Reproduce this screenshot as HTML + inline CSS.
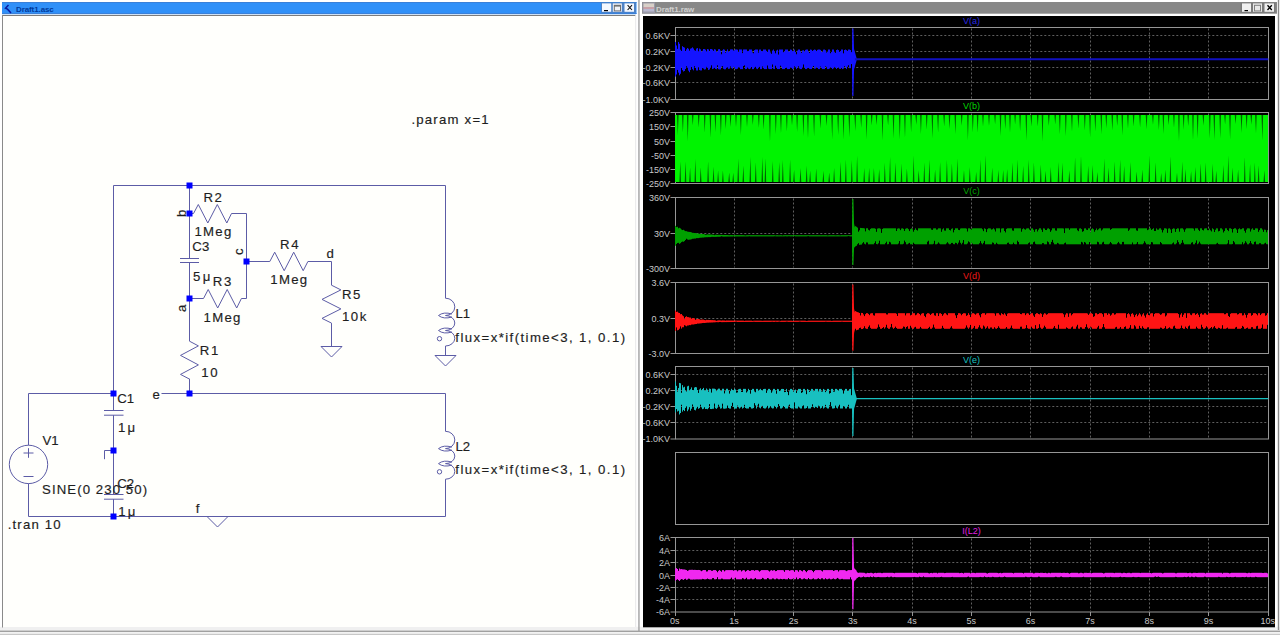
<!DOCTYPE html>
<html><head><meta charset="utf-8"><style>
html,body{margin:0;padding:0;width:1280px;height:635px;overflow:hidden;background:#fff;}
svg{display:block;font-family:"Liberation Sans",sans-serif;}
</style></head><body>
<svg width="1280" height="635" viewBox="0 0 1280 635">
<rect x="0" y="0" width="1280" height="635" fill="#ffffff"/>
<!-- bottom strip -->
<rect x="0" y="626.8" width="1280" height="4" fill="#f0f0f0"/>
<rect x="0" y="630.6" width="1280" height="1.3" fill="#969696"/>
<rect x="0" y="632" width="1280" height="1.8" fill="#f2f2f2"/>
<rect x="0" y="633.8" width="1280" height="1.2" fill="#c8c8c8"/>
<!-- left window -->
<rect x="2" y="2" width="634.5" height="12" fill="#3090f8"/>
<rect x="2" y="2" width="634.5" height="1" fill="#3a80d8"/>
<rect x="2" y="13" width="634.5" height="1" fill="#3a80d8"/>
<rect x="2" y="14" width="634" height="1" fill="#cfe2f6"/>
<rect x="2" y="15" width="634" height="1" fill="#7c7c7c"/>
<rect x="3" y="16" width="632" height="611" fill="#fffffc"/>
<rect x="2" y="15" width="1" height="612.5" fill="#8a8a8a"/>
<path d="M8.5 5 L5.5 8.2 L7.5 9.2 L11 13" fill="none" stroke="#0a1aa0" stroke-width="1.5"/>
<text x="16" y="11.5" font-size="8" font-weight="bold" fill="#003a9a" letter-spacing="-0.1">Draft1.asc</text>
<rect x="601" y="2.6" width="35" height="10.2" fill="#4f82c4"/>
<rect x="602" y="3.4" width="9.2" height="8.4" fill="#f4f8ff"/>
<rect x="604" y="10" width="4" height="1.2" fill="#000"/>
<rect x="612.8" y="3.4" width="9" height="8.4" fill="#f0f2f8"/>
<rect x="614.3" y="5.3" width="6.2" height="5.6" fill="none" stroke="#707070" stroke-width="1"/>
<rect x="614" y="5" width="6.8" height="1.6" fill="#707070"/>
<rect x="624.5" y="3.4" width="9.5" height="8.4" fill="#f4f8ff"/>
<path d="M627.6 5.2 L632 10 M632 5.2 L627.6 10" stroke="#111" stroke-width="1.1"/>
<rect x="638.3" y="0" width="1.3" height="631" fill="#9a9a9a"/><rect x="635.2" y="15" width="1" height="612" fill="#e8e8e8"/>
<!-- schematic -->
<path d="M113.50 393.50 L113.50 185.50 L445.50 185.50 L445.50 298.20" fill="none" stroke="#5c5ca6" stroke-width="1"/><path d="M189.50 185.50 L189.50 258.50" fill="none" stroke="#5c5ca6" stroke-width="1"/><path d="M189.50 262.50 L189.50 341.20" fill="none" stroke="#5c5ca6" stroke-width="1"/><path d="M189.50 378.80 L189.50 393.50" fill="none" stroke="#5c5ca6" stroke-width="1"/><path d="M180.00 258.50 L199.00 258.50" fill="none" stroke="#5c5ca6" stroke-width="1"/><path d="M180.00 262.50 L199.00 262.50" fill="none" stroke="#5c5ca6" stroke-width="1"/><path d="M189.50 213.50 L193.50 213.50 L198.30 204.50 L207.80 223.00 L217.30 204.50 L226.80 223.00 L231.50 213.50 L246.50 213.50 L246.50 298.50" fill="none" stroke="#5c5ca6" stroke-width="1"/><path d="M189.50 298.50 L203.50 298.50 L208.20 289.50 L217.70 308.00 L227.20 289.50 L236.70 308.00 L241.40 298.50 L246.50 298.50" fill="none" stroke="#5c5ca6" stroke-width="1"/><path d="M246.50 261.50 L269.80 261.50 L274.70 252.20 L284.20 270.70 L293.70 252.20 L303.20 270.70 L307.90 261.50 L331.50 261.50 L331.50 285.20" fill="none" stroke="#5c5ca6" stroke-width="1"/><path d="M331.50 285.20 L340.90 289.90 L322.00 299.40 L340.90 308.90 L322.00 318.40 L331.50 323.10 L331.50 346.50" fill="none" stroke="#5c5ca6" stroke-width="1"/><path d="M189.50 341.20 L198.40 345.90 L180.50 355.40 L198.40 364.90 L180.50 374.40 L189.50 379.10" fill="none" stroke="#5c5ca6" stroke-width="1"/><path d="M321.00 346.50 L342.00 346.50 L331.50 357.00 L321.00 346.50" fill="none" stroke="#5c5ca6" stroke-width="1"/><path d="M435.00 355.50 L456.00 355.50 L445.50 366.00 L435.00 355.50" fill="none" stroke="#5c5ca6" stroke-width="1"/><path d="M207.00 516.50 L228.00 516.50 L217.50 527.00 L207.00 516.50" fill="none" stroke="#5c5ca6" stroke-width="1"/><path d="M161.50 393.50 L445.50 393.50 L445.50 431.30" fill="none" stroke="#5c5ca6" stroke-width="1"/><path d="M113.50 393.50 L28.50 393.50 L28.50 445.20" fill="none" stroke="#5c5ca6" stroke-width="1"/><path d="M28.50 483.60 L28.50 516.50 L445.50 516.50 L445.50 479.20" fill="none" stroke="#5c5ca6" stroke-width="1"/><circle cx="28.5" cy="464.4" r="19.2" fill="none" stroke="#5c5ca6" stroke-width="1"/><path d="M23.50 453.00 L33.50 453.00" fill="none" stroke="#5c5ca6" stroke-width="1"/><path d="M28.50 448.20 L28.50 457.80" fill="none" stroke="#5c5ca6" stroke-width="1"/><path d="M23.50 476.50 L33.50 476.50" fill="none" stroke="#5c5ca6" stroke-width="1"/><path d="M113.50 393.50 L113.50 410.50" fill="none" stroke="#5c5ca6" stroke-width="1"/><path d="M104.00 410.50 L123.50 410.50" fill="none" stroke="#5c5ca6" stroke-width="1"/><path d="M104.00 415.20 L123.50 415.20" fill="none" stroke="#5c5ca6" stroke-width="1"/><path d="M113.50 415.20 L113.50 494.50" fill="none" stroke="#5c5ca6" stroke-width="1"/><path d="M104.00 494.50 L123.50 494.50" fill="none" stroke="#5c5ca6" stroke-width="1"/><path d="M104.00 499.20 L123.50 499.20" fill="none" stroke="#5c5ca6" stroke-width="1"/><path d="M113.50 499.20 L113.50 516.50" fill="none" stroke="#5c5ca6" stroke-width="1"/><path d="M104.50 459.20 L104.50 450.50 L113.50 450.50" fill="none" stroke="#5c5ca6" stroke-width="1"/><path d="M445.50 298.10 L445.50 298.20" fill="none" stroke="#5c5ca6" stroke-width="1"/><path d="M445.5 298.20 A9.3 8.65 0 0 1 445.5 315.50" fill="none" stroke="#5c5ca6" stroke-width="1"/><path d="M445.5 315.50 A9.3 7.50 0 0 1 445.5 330.50" fill="none" stroke="#5c5ca6" stroke-width="1"/><path d="M445.5 330.50 A9.3 7.75 0 0 1 445.5 346.00" fill="none" stroke="#5c5ca6" stroke-width="1"/><path d="M452.0 314.00 Q443.5 311.50 438.5 315.50 Q443.5 319.50 452.0 317.00" fill="none" stroke="#5c5ca6" stroke-width="1"/><path d="M452.0 329.00 Q443.5 326.50 438.5 330.50 Q443.5 334.50 452.0 332.00" fill="none" stroke="#5c5ca6" stroke-width="1"/><circle cx="439.5" cy="338.70" r="2.2" fill="none" stroke="#5c5ca6" stroke-width="1"/><path d="M445.50 346.00 L445.50 355.50" fill="none" stroke="#5c5ca6" stroke-width="1"/><path d="M445.50 431.20 L445.50 431.30" fill="none" stroke="#5c5ca6" stroke-width="1"/><path d="M445.5 431.30 A9.3 8.65 0 0 1 445.5 448.60" fill="none" stroke="#5c5ca6" stroke-width="1"/><path d="M445.5 448.60 A9.3 7.50 0 0 1 445.5 463.60" fill="none" stroke="#5c5ca6" stroke-width="1"/><path d="M445.5 463.60 A9.3 7.80 0 0 1 445.5 479.20" fill="none" stroke="#5c5ca6" stroke-width="1"/><path d="M452.0 447.10 Q443.5 444.60 438.5 448.60 Q443.5 452.60 452.0 450.10" fill="none" stroke="#5c5ca6" stroke-width="1"/><path d="M452.0 462.10 Q443.5 459.60 438.5 463.60 Q443.5 467.60 452.0 465.10" fill="none" stroke="#5c5ca6" stroke-width="1"/><circle cx="439.5" cy="471.80" r="2.2" fill="none" stroke="#5c5ca6" stroke-width="1"/><rect x="186.50" y="182.50" width="6" height="6" fill="#0000ff"/><rect x="186.50" y="210.50" width="6" height="6" fill="#0000ff"/><rect x="243.50" y="258.50" width="6" height="6" fill="#0000ff"/><rect x="186.50" y="295.50" width="6" height="6" fill="#0000ff"/><rect x="186.50" y="390.50" width="6" height="6" fill="#0000ff"/><rect x="110.50" y="390.50" width="6" height="6" fill="#0000ff"/><rect x="110.50" y="447.50" width="6" height="6" fill="#0000ff"/><rect x="110.50" y="513.50" width="6" height="6" fill="#0000ff"/><text x="0" y="0" font-size="12" letter-spacing="1.1" fill="#1e1e1e" stroke="#1e1e1e" stroke-width="0.15" text-anchor="start" transform="translate(411.4 123.8) scale(1.1 1)">.param x=1</text><text x="0" y="0" font-size="12" letter-spacing="1.45" fill="#1e1e1e" stroke="#1e1e1e" stroke-width="0.15" text-anchor="start" transform="translate(203.5 201.8) scale(1.1 1)">R2</text><text x="0" y="0" font-size="12" letter-spacing="1.15" fill="#1e1e1e" stroke="#1e1e1e" stroke-width="0.15" text-anchor="start" transform="translate(194.5 236) scale(1.1 1)">1Meg</text><text x="0" y="0" font-size="12" letter-spacing="0.2" fill="#1e1e1e" stroke="#1e1e1e" stroke-width="0.15" text-anchor="start" transform="translate(192.3 251.3) scale(1.1 1)">C3</text><text x="0" y="0" font-size="12" letter-spacing="2.2" fill="#1e1e1e" stroke="#1e1e1e" stroke-width="0.15" text-anchor="start" transform="translate(193.0 281) scale(1.1 1)">5μ</text><text x="0" y="0" font-size="12" letter-spacing="1.45" fill="#1e1e1e" stroke="#1e1e1e" stroke-width="0.15" text-anchor="start" transform="translate(212.8 286) scale(1.1 1)">R3</text><text x="0" y="0" font-size="12" letter-spacing="1.15" fill="#1e1e1e" stroke="#1e1e1e" stroke-width="0.15" text-anchor="start" transform="translate(203.6 322) scale(1.1 1)">1Meg</text><text x="0" y="0" font-size="12" letter-spacing="1.45" fill="#1e1e1e" stroke="#1e1e1e" stroke-width="0.15" text-anchor="start" transform="translate(280.1 248.7) scale(1.1 1)">R4</text><text x="0" y="0" font-size="12" letter-spacing="1.15" fill="#1e1e1e" stroke="#1e1e1e" stroke-width="0.15" text-anchor="start" transform="translate(270.3 284) scale(1.1 1)">1Meg</text><text x="0" y="0" font-size="12" letter-spacing="0" fill="#1e1e1e" stroke="#1e1e1e" stroke-width="0.15" text-anchor="start" transform="translate(326.6 258.1) scale(1.1 1)">d</text><text x="0" y="0" font-size="12" letter-spacing="1.45" fill="#1e1e1e" stroke="#1e1e1e" stroke-width="0.15" text-anchor="start" transform="translate(341.9 299) scale(1.1 1)">R5</text><text x="0" y="0" font-size="12" letter-spacing="1.45" fill="#1e1e1e" stroke="#1e1e1e" stroke-width="0.15" text-anchor="start" transform="translate(341.9 320.5) scale(1.1 1)">10k</text><text x="0" y="0" font-size="12" letter-spacing="1.45" fill="#1e1e1e" stroke="#1e1e1e" stroke-width="0.15" text-anchor="start" transform="translate(199.8 355.4) scale(1.1 1)">R1</text><text x="0" y="0" font-size="12" letter-spacing="1.5" fill="#1e1e1e" stroke="#1e1e1e" stroke-width="0.15" text-anchor="start" transform="translate(201.2 376.7) scale(1.1 1)">10</text><text x="0" y="0" font-size="12" letter-spacing="0" fill="#1e1e1e" stroke="#1e1e1e" stroke-width="0.15" text-anchor="start" transform="translate(152.6 398.6) scale(1.1 1)">e</text><text x="0" y="0" font-size="12" letter-spacing="0" fill="#1e1e1e" stroke="#1e1e1e" stroke-width="0.15" text-anchor="start" transform="translate(455.4 318.3) scale(1.1 1)">L1</text><text x="0" y="0" font-size="12" letter-spacing="1.29" fill="#1e1e1e" stroke="#1e1e1e" stroke-width="0.15" text-anchor="start" transform="translate(455.3 341.6) scale(1.1 1)">flux=x*if(time&lt;3, 1, 0.1)</text><text x="0" y="0" font-size="12" letter-spacing="0" fill="#1e1e1e" stroke="#1e1e1e" stroke-width="0.15" text-anchor="start" transform="translate(455.4 450.9) scale(1.1 1)">L2</text><text x="0" y="0" font-size="12" letter-spacing="1.29" fill="#1e1e1e" stroke="#1e1e1e" stroke-width="0.15" text-anchor="start" transform="translate(455.3 473.5) scale(1.1 1)">flux=x*if(time&lt;3, 1, 0.1)</text><text x="0" y="0" font-size="12" letter-spacing="0" fill="#1e1e1e" stroke="#1e1e1e" stroke-width="0.15" text-anchor="start" transform="translate(42.5 445.4) scale(1.1 1)">V1</text><text x="0" y="0" font-size="12" letter-spacing="0.99" fill="#1e1e1e" stroke="#1e1e1e" stroke-width="0.15" text-anchor="start" transform="translate(42.0 493.75) scale(1.1 1)">SINE(0 230 50)</text><text x="0" y="0" font-size="12" letter-spacing="0" fill="#1e1e1e" stroke="#1e1e1e" stroke-width="0.15" text-anchor="start" transform="translate(117.3 403) scale(1.1 1)">C1</text><text x="0" y="0" font-size="12" letter-spacing="2" fill="#1e1e1e" stroke="#1e1e1e" stroke-width="0.15" text-anchor="start" transform="translate(117.9 431.8) scale(1.1 1)">1μ</text><text x="0" y="0" font-size="12" letter-spacing="0" fill="#1e1e1e" stroke="#1e1e1e" stroke-width="0.15" text-anchor="start" transform="translate(117.2 488.2) scale(1.1 1)">C2</text><text x="0" y="0" font-size="12" letter-spacing="2" fill="#1e1e1e" stroke="#1e1e1e" stroke-width="0.15" text-anchor="start" transform="translate(118.3 516.25) scale(1.1 1)">1μ</text><text x="0" y="0" font-size="12" letter-spacing="0" fill="#1e1e1e" stroke="#1e1e1e" stroke-width="0.15" text-anchor="start" transform="translate(195.8 513) scale(1.1 1)">f</text><text x="0" y="0" font-size="12" letter-spacing="1.07" fill="#1e1e1e" stroke="#1e1e1e" stroke-width="0.15" text-anchor="start" transform="translate(7.65 528.75) scale(1.1 1)">.tran 10</text><text x="0" y="0" font-size="12" letter-spacing="0" fill="#1e1e1e" stroke="#1e1e1e" stroke-width="0.15" text-anchor="start" transform="translate(185.5 217) rotate(-90) scale(1.1 1)">b</text><text x="0" y="0" font-size="12" letter-spacing="0" fill="#1e1e1e" stroke="#1e1e1e" stroke-width="0.15" text-anchor="start" transform="translate(185.5 312) rotate(-90) scale(1.1 1)">a</text><text x="0" y="0" font-size="12" letter-spacing="0" fill="#1e1e1e" stroke="#1e1e1e" stroke-width="0.15" text-anchor="start" transform="translate(242.5 255) rotate(-90) scale(1.1 1)">c</text>
<!-- right window -->
<rect x="642" y="2" width="635" height="11.7" fill="#888888"/>
<rect x="642.5" y="2.5" width="12.5" height="10.8" fill="#9a9aa8"/>
<rect x="643.5" y="3.5" width="10.5" height="3.5" fill="#d8d0c8"/>
<rect x="643.5" y="7" width="10.5" height="2" fill="#c8a0a8"/>
<rect x="643.5" y="9" width="10.5" height="2.5" fill="#b8b8d0"/>
<text x="656" y="11.5" font-size="8" font-weight="bold" fill="#d0d0d0" letter-spacing="-0.1">Draft1.raw</text>
<rect x="1240.5" y="2.6" width="35" height="10.2" fill="#7a7a7a"/>
<rect x="1242" y="3.4" width="9" height="8.4" fill="#f0f0f0"/>
<rect x="1244.5" y="10" width="3.5" height="1.2" fill="#000"/>
<rect x="1253" y="3.4" width="9" height="8.4" fill="#e8e8e8"/>
<rect x="1254.5" y="5.3" width="6" height="5.6" fill="none" stroke="#808080" stroke-width="1"/>
<rect x="1264.5" y="3.4" width="9.5" height="8.4" fill="#f0f0f0"/>
<path d="M1267.5 5.2 L1271.8 10 M1271.8 5.2 L1267.5 10" stroke="#000" stroke-width="1.3"/>
<rect x="643" y="16" width="632" height="611.3" fill="#000000"/>
<rect x="1277.8" y="0" width="1.4" height="630" fill="#8a8a8a"/>
<text x="971.5" y="23.5" font-size="9" fill="#2a2ae0" text-anchor="middle" font-weight="normal">V(a)</text><path d="M734.50 28.50 L734.50 98.50" fill="none" stroke="#5e5e5e" stroke-width="1" stroke-dasharray="2 2"/><path d="M793.50 28.50 L793.50 98.50" fill="none" stroke="#5e5e5e" stroke-width="1" stroke-dasharray="2 2"/><path d="M852.50 28.50 L852.50 98.50" fill="none" stroke="#5e5e5e" stroke-width="1" stroke-dasharray="2 2"/><path d="M912.50 28.50 L912.50 98.50" fill="none" stroke="#5e5e5e" stroke-width="1" stroke-dasharray="2 2"/><path d="M971.50 28.50 L971.50 98.50" fill="none" stroke="#5e5e5e" stroke-width="1" stroke-dasharray="2 2"/><path d="M1030.50 28.50 L1030.50 98.50" fill="none" stroke="#5e5e5e" stroke-width="1" stroke-dasharray="2 2"/><path d="M1090.50 28.50 L1090.50 98.50" fill="none" stroke="#5e5e5e" stroke-width="1" stroke-dasharray="2 2"/><path d="M1149.50 28.50 L1149.50 98.50" fill="none" stroke="#5e5e5e" stroke-width="1" stroke-dasharray="2 2"/><path d="M1208.50 28.50 L1208.50 98.50" fill="none" stroke="#5e5e5e" stroke-width="1" stroke-dasharray="2 2"/><path d="M676.30 35.50 L1267.30 35.50" fill="none" stroke="#5e5e5e" stroke-width="1" stroke-dasharray="2 2"/><path d="M670.50 35.50 L675.50 35.50" fill="none" stroke="#969696" stroke-width="1"/><text x="670" y="38.8" font-size="9" fill="#c8c8c8" text-anchor="end" font-weight="normal">0.6KV</text><path d="M676.30 51.50 L1267.30 51.50" fill="none" stroke="#5e5e5e" stroke-width="1" stroke-dasharray="2 2"/><path d="M670.50 51.50 L675.50 51.50" fill="none" stroke="#969696" stroke-width="1"/><text x="670" y="54.8" font-size="9" fill="#c8c8c8" text-anchor="end" font-weight="normal">0.2KV</text><path d="M676.30 67.50 L1267.30 67.50" fill="none" stroke="#5e5e5e" stroke-width="1" stroke-dasharray="2 2"/><path d="M670.50 67.50 L675.50 67.50" fill="none" stroke="#969696" stroke-width="1"/><text x="670" y="70.8" font-size="9" fill="#c8c8c8" text-anchor="end" font-weight="normal">-0.2KV</text><path d="M676.30 82.50 L1267.30 82.50" fill="none" stroke="#5e5e5e" stroke-width="1" stroke-dasharray="2 2"/><path d="M670.50 82.50 L675.50 82.50" fill="none" stroke="#969696" stroke-width="1"/><text x="670" y="85.8" font-size="9" fill="#c8c8c8" text-anchor="end" font-weight="normal">-0.6KV</text><path d="M670.50 99.50 L675.50 99.50" fill="none" stroke="#969696" stroke-width="1"/><text x="670" y="102.8" font-size="9" fill="#c8c8c8" text-anchor="end" font-weight="normal">-1.0KV</text><rect x="675.5" y="27.5" width="593" height="72.0" fill="none" stroke="#969696" stroke-width="1"/><text x="971.5" y="108.5" font-size="9" fill="#00d800" text-anchor="middle" font-weight="normal">V(b)</text><path d="M734.50 113.50 L734.50 182.50" fill="none" stroke="#5e5e5e" stroke-width="1" stroke-dasharray="2 2"/><path d="M793.50 113.50 L793.50 182.50" fill="none" stroke="#5e5e5e" stroke-width="1" stroke-dasharray="2 2"/><path d="M852.50 113.50 L852.50 182.50" fill="none" stroke="#5e5e5e" stroke-width="1" stroke-dasharray="2 2"/><path d="M912.50 113.50 L912.50 182.50" fill="none" stroke="#5e5e5e" stroke-width="1" stroke-dasharray="2 2"/><path d="M971.50 113.50 L971.50 182.50" fill="none" stroke="#5e5e5e" stroke-width="1" stroke-dasharray="2 2"/><path d="M1030.50 113.50 L1030.50 182.50" fill="none" stroke="#5e5e5e" stroke-width="1" stroke-dasharray="2 2"/><path d="M1090.50 113.50 L1090.50 182.50" fill="none" stroke="#5e5e5e" stroke-width="1" stroke-dasharray="2 2"/><path d="M1149.50 113.50 L1149.50 182.50" fill="none" stroke="#5e5e5e" stroke-width="1" stroke-dasharray="2 2"/><path d="M1208.50 113.50 L1208.50 182.50" fill="none" stroke="#5e5e5e" stroke-width="1" stroke-dasharray="2 2"/><path d="M670.50 112.50 L675.50 112.50" fill="none" stroke="#969696" stroke-width="1"/><text x="670" y="115.8" font-size="9" fill="#c8c8c8" text-anchor="end" font-weight="normal">250V</text><path d="M676.30 126.50 L1267.30 126.50" fill="none" stroke="#5e5e5e" stroke-width="1" stroke-dasharray="2 2"/><path d="M670.50 126.50 L675.50 126.50" fill="none" stroke="#969696" stroke-width="1"/><text x="670" y="129.8" font-size="9" fill="#c8c8c8" text-anchor="end" font-weight="normal">150V</text><path d="M676.30 141.50 L1267.30 141.50" fill="none" stroke="#5e5e5e" stroke-width="1" stroke-dasharray="2 2"/><path d="M670.50 141.50 L675.50 141.50" fill="none" stroke="#969696" stroke-width="1"/><text x="670" y="144.8" font-size="9" fill="#c8c8c8" text-anchor="end" font-weight="normal">50V</text><path d="M676.30 155.50 L1267.30 155.50" fill="none" stroke="#5e5e5e" stroke-width="1" stroke-dasharray="2 2"/><path d="M670.50 155.50 L675.50 155.50" fill="none" stroke="#969696" stroke-width="1"/><text x="670" y="158.8" font-size="9" fill="#c8c8c8" text-anchor="end" font-weight="normal">-50V</text><path d="M676.30 169.50 L1267.30 169.50" fill="none" stroke="#5e5e5e" stroke-width="1" stroke-dasharray="2 2"/><path d="M670.50 169.50 L675.50 169.50" fill="none" stroke="#969696" stroke-width="1"/><text x="670" y="172.8" font-size="9" fill="#c8c8c8" text-anchor="end" font-weight="normal">-150V</text><path d="M670.50 183.50 L675.50 183.50" fill="none" stroke="#969696" stroke-width="1"/><text x="670" y="186.8" font-size="9" fill="#c8c8c8" text-anchor="end" font-weight="normal">-250V</text><rect x="675.5" y="112.5" width="593" height="71.0" fill="none" stroke="#969696" stroke-width="1"/><text x="971.5" y="193.5" font-size="9" fill="#00a800" text-anchor="middle" font-weight="normal">V(c)</text><path d="M734.50 198.50 L734.50 267.50" fill="none" stroke="#5e5e5e" stroke-width="1" stroke-dasharray="2 2"/><path d="M793.50 198.50 L793.50 267.50" fill="none" stroke="#5e5e5e" stroke-width="1" stroke-dasharray="2 2"/><path d="M852.50 198.50 L852.50 267.50" fill="none" stroke="#5e5e5e" stroke-width="1" stroke-dasharray="2 2"/><path d="M912.50 198.50 L912.50 267.50" fill="none" stroke="#5e5e5e" stroke-width="1" stroke-dasharray="2 2"/><path d="M971.50 198.50 L971.50 267.50" fill="none" stroke="#5e5e5e" stroke-width="1" stroke-dasharray="2 2"/><path d="M1030.50 198.50 L1030.50 267.50" fill="none" stroke="#5e5e5e" stroke-width="1" stroke-dasharray="2 2"/><path d="M1090.50 198.50 L1090.50 267.50" fill="none" stroke="#5e5e5e" stroke-width="1" stroke-dasharray="2 2"/><path d="M1149.50 198.50 L1149.50 267.50" fill="none" stroke="#5e5e5e" stroke-width="1" stroke-dasharray="2 2"/><path d="M1208.50 198.50 L1208.50 267.50" fill="none" stroke="#5e5e5e" stroke-width="1" stroke-dasharray="2 2"/><path d="M670.50 197.50 L675.50 197.50" fill="none" stroke="#969696" stroke-width="1"/><text x="670" y="200.8" font-size="9" fill="#c8c8c8" text-anchor="end" font-weight="normal">360V</text><path d="M676.30 233.50 L1267.30 233.50" fill="none" stroke="#5e5e5e" stroke-width="1" stroke-dasharray="2 2"/><path d="M670.50 233.50 L675.50 233.50" fill="none" stroke="#969696" stroke-width="1"/><text x="670" y="236.8" font-size="9" fill="#c8c8c8" text-anchor="end" font-weight="normal">30V</text><path d="M670.50 268.50 L675.50 268.50" fill="none" stroke="#969696" stroke-width="1"/><text x="670" y="271.8" font-size="9" fill="#c8c8c8" text-anchor="end" font-weight="normal">-300V</text><rect x="675.5" y="197.5" width="593" height="71.0" fill="none" stroke="#969696" stroke-width="1"/><text x="971.5" y="278.5" font-size="9" fill="#f01818" text-anchor="middle" font-weight="normal">V(d)</text><path d="M734.50 283.50 L734.50 352.50" fill="none" stroke="#5e5e5e" stroke-width="1" stroke-dasharray="2 2"/><path d="M793.50 283.50 L793.50 352.50" fill="none" stroke="#5e5e5e" stroke-width="1" stroke-dasharray="2 2"/><path d="M852.50 283.50 L852.50 352.50" fill="none" stroke="#5e5e5e" stroke-width="1" stroke-dasharray="2 2"/><path d="M912.50 283.50 L912.50 352.50" fill="none" stroke="#5e5e5e" stroke-width="1" stroke-dasharray="2 2"/><path d="M971.50 283.50 L971.50 352.50" fill="none" stroke="#5e5e5e" stroke-width="1" stroke-dasharray="2 2"/><path d="M1030.50 283.50 L1030.50 352.50" fill="none" stroke="#5e5e5e" stroke-width="1" stroke-dasharray="2 2"/><path d="M1090.50 283.50 L1090.50 352.50" fill="none" stroke="#5e5e5e" stroke-width="1" stroke-dasharray="2 2"/><path d="M1149.50 283.50 L1149.50 352.50" fill="none" stroke="#5e5e5e" stroke-width="1" stroke-dasharray="2 2"/><path d="M1208.50 283.50 L1208.50 352.50" fill="none" stroke="#5e5e5e" stroke-width="1" stroke-dasharray="2 2"/><path d="M670.50 282.50 L675.50 282.50" fill="none" stroke="#969696" stroke-width="1"/><text x="670" y="285.8" font-size="9" fill="#c8c8c8" text-anchor="end" font-weight="normal">3.6V</text><path d="M676.30 318.50 L1267.30 318.50" fill="none" stroke="#5e5e5e" stroke-width="1" stroke-dasharray="2 2"/><path d="M670.50 318.50 L675.50 318.50" fill="none" stroke="#969696" stroke-width="1"/><text x="670" y="321.8" font-size="9" fill="#c8c8c8" text-anchor="end" font-weight="normal">0.3V</text><path d="M670.50 353.50 L675.50 353.50" fill="none" stroke="#969696" stroke-width="1"/><text x="670" y="356.8" font-size="9" fill="#c8c8c8" text-anchor="end" font-weight="normal">-3.0V</text><rect x="675.5" y="282.5" width="593" height="71.0" fill="none" stroke="#969696" stroke-width="1"/><text x="971.5" y="362.5" font-size="9" fill="#18c0c0" text-anchor="middle" font-weight="normal">V(e)</text><path d="M734.50 367.50 L734.50 438.00" fill="none" stroke="#5e5e5e" stroke-width="1" stroke-dasharray="2 2"/><path d="M793.50 367.50 L793.50 438.00" fill="none" stroke="#5e5e5e" stroke-width="1" stroke-dasharray="2 2"/><path d="M852.50 367.50 L852.50 438.00" fill="none" stroke="#5e5e5e" stroke-width="1" stroke-dasharray="2 2"/><path d="M912.50 367.50 L912.50 438.00" fill="none" stroke="#5e5e5e" stroke-width="1" stroke-dasharray="2 2"/><path d="M971.50 367.50 L971.50 438.00" fill="none" stroke="#5e5e5e" stroke-width="1" stroke-dasharray="2 2"/><path d="M1030.50 367.50 L1030.50 438.00" fill="none" stroke="#5e5e5e" stroke-width="1" stroke-dasharray="2 2"/><path d="M1090.50 367.50 L1090.50 438.00" fill="none" stroke="#5e5e5e" stroke-width="1" stroke-dasharray="2 2"/><path d="M1149.50 367.50 L1149.50 438.00" fill="none" stroke="#5e5e5e" stroke-width="1" stroke-dasharray="2 2"/><path d="M1208.50 367.50 L1208.50 438.00" fill="none" stroke="#5e5e5e" stroke-width="1" stroke-dasharray="2 2"/><path d="M676.30 374.50 L1267.30 374.50" fill="none" stroke="#5e5e5e" stroke-width="1" stroke-dasharray="2 2"/><path d="M670.50 374.50 L675.50 374.50" fill="none" stroke="#969696" stroke-width="1"/><text x="670" y="377.8" font-size="9" fill="#c8c8c8" text-anchor="end" font-weight="normal">0.6KV</text><path d="M676.30 390.50 L1267.30 390.50" fill="none" stroke="#5e5e5e" stroke-width="1" stroke-dasharray="2 2"/><path d="M670.50 390.50 L675.50 390.50" fill="none" stroke="#969696" stroke-width="1"/><text x="670" y="393.8" font-size="9" fill="#c8c8c8" text-anchor="end" font-weight="normal">0.2KV</text><path d="M676.30 406.50 L1267.30 406.50" fill="none" stroke="#5e5e5e" stroke-width="1" stroke-dasharray="2 2"/><path d="M670.50 406.50 L675.50 406.50" fill="none" stroke="#969696" stroke-width="1"/><text x="670" y="409.8" font-size="9" fill="#c8c8c8" text-anchor="end" font-weight="normal">-0.2KV</text><path d="M676.30 422.50 L1267.30 422.50" fill="none" stroke="#5e5e5e" stroke-width="1" stroke-dasharray="2 2"/><path d="M670.50 422.50 L675.50 422.50" fill="none" stroke="#969696" stroke-width="1"/><text x="670" y="425.8" font-size="9" fill="#c8c8c8" text-anchor="end" font-weight="normal">-0.6KV</text><path d="M670.50 439.00 L675.50 439.00" fill="none" stroke="#969696" stroke-width="1"/><text x="670" y="442.3" font-size="9" fill="#c8c8c8" text-anchor="end" font-weight="normal">-1.0KV</text><rect x="675.5" y="366.5" width="593" height="72.5" fill="none" stroke="#969696" stroke-width="1"/><rect x="675.5" y="452.5" width="593" height="72.0" fill="none" stroke="#969696" stroke-width="1"/><text x="971.5" y="533.5" font-size="9" fill="#e020e0" text-anchor="middle" font-weight="normal">I(L2)</text><path d="M734.50 538.50 L734.50 611.00" fill="none" stroke="#5e5e5e" stroke-width="1" stroke-dasharray="2 2"/><path d="M793.50 538.50 L793.50 611.00" fill="none" stroke="#5e5e5e" stroke-width="1" stroke-dasharray="2 2"/><path d="M852.50 538.50 L852.50 611.00" fill="none" stroke="#5e5e5e" stroke-width="1" stroke-dasharray="2 2"/><path d="M912.50 538.50 L912.50 611.00" fill="none" stroke="#5e5e5e" stroke-width="1" stroke-dasharray="2 2"/><path d="M971.50 538.50 L971.50 611.00" fill="none" stroke="#5e5e5e" stroke-width="1" stroke-dasharray="2 2"/><path d="M1030.50 538.50 L1030.50 611.00" fill="none" stroke="#5e5e5e" stroke-width="1" stroke-dasharray="2 2"/><path d="M1090.50 538.50 L1090.50 611.00" fill="none" stroke="#5e5e5e" stroke-width="1" stroke-dasharray="2 2"/><path d="M1149.50 538.50 L1149.50 611.00" fill="none" stroke="#5e5e5e" stroke-width="1" stroke-dasharray="2 2"/><path d="M1208.50 538.50 L1208.50 611.00" fill="none" stroke="#5e5e5e" stroke-width="1" stroke-dasharray="2 2"/><path d="M670.50 537.50 L675.50 537.50" fill="none" stroke="#969696" stroke-width="1"/><text x="670" y="540.8" font-size="9" fill="#c8c8c8" text-anchor="end" font-weight="normal">6A</text><path d="M676.30 550.50 L1267.30 550.50" fill="none" stroke="#5e5e5e" stroke-width="1" stroke-dasharray="2 2"/><path d="M670.50 550.50 L675.50 550.50" fill="none" stroke="#969696" stroke-width="1"/><text x="670" y="553.8" font-size="9" fill="#c8c8c8" text-anchor="end" font-weight="normal">4A</text><path d="M676.30 562.50 L1267.30 562.50" fill="none" stroke="#5e5e5e" stroke-width="1" stroke-dasharray="2 2"/><path d="M670.50 562.50 L675.50 562.50" fill="none" stroke="#969696" stroke-width="1"/><text x="670" y="565.8" font-size="9" fill="#c8c8c8" text-anchor="end" font-weight="normal">2A</text><path d="M676.30 575.50 L1267.30 575.50" fill="none" stroke="#5e5e5e" stroke-width="1" stroke-dasharray="2 2"/><path d="M670.50 575.50 L675.50 575.50" fill="none" stroke="#969696" stroke-width="1"/><text x="670" y="578.8" font-size="9" fill="#c8c8c8" text-anchor="end" font-weight="normal">0A</text><path d="M676.30 587.50 L1267.30 587.50" fill="none" stroke="#5e5e5e" stroke-width="1" stroke-dasharray="2 2"/><path d="M670.50 587.50 L675.50 587.50" fill="none" stroke="#969696" stroke-width="1"/><text x="670" y="590.8" font-size="9" fill="#c8c8c8" text-anchor="end" font-weight="normal">-2A</text><path d="M676.30 599.50 L1267.30 599.50" fill="none" stroke="#5e5e5e" stroke-width="1" stroke-dasharray="2 2"/><path d="M670.50 599.50 L675.50 599.50" fill="none" stroke="#969696" stroke-width="1"/><text x="670" y="602.8" font-size="9" fill="#c8c8c8" text-anchor="end" font-weight="normal">-4A</text><path d="M670.50 612.00 L675.50 612.00" fill="none" stroke="#969696" stroke-width="1"/><text x="670" y="615.3" font-size="9" fill="#c8c8c8" text-anchor="end" font-weight="normal">-6A</text><rect x="675.5" y="537.5" width="593" height="74.5" fill="none" stroke="#969696" stroke-width="1"/><text x="674.8" y="623.5" font-size="9" fill="#c8c8c8" text-anchor="middle" font-weight="normal">0s</text><path d="M675.50 612.00 L675.50 616.00" fill="none" stroke="#969696" stroke-width="1"/><text x="734.0999999999999" y="623.5" font-size="9" fill="#c8c8c8" text-anchor="middle" font-weight="normal">1s</text><path d="M734.50 612.00 L734.50 616.00" fill="none" stroke="#969696" stroke-width="1"/><text x="793.4" y="623.5" font-size="9" fill="#c8c8c8" text-anchor="middle" font-weight="normal">2s</text><path d="M793.50 612.00 L793.50 616.00" fill="none" stroke="#969696" stroke-width="1"/><text x="852.6999999999999" y="623.5" font-size="9" fill="#c8c8c8" text-anchor="middle" font-weight="normal">3s</text><path d="M852.50 612.00 L852.50 616.00" fill="none" stroke="#969696" stroke-width="1"/><text x="912.0" y="623.5" font-size="9" fill="#c8c8c8" text-anchor="middle" font-weight="normal">4s</text><path d="M912.50 612.00 L912.50 616.00" fill="none" stroke="#969696" stroke-width="1"/><text x="971.3" y="623.5" font-size="9" fill="#c8c8c8" text-anchor="middle" font-weight="normal">5s</text><path d="M971.50 612.00 L971.50 616.00" fill="none" stroke="#969696" stroke-width="1"/><text x="1030.6" y="623.5" font-size="9" fill="#c8c8c8" text-anchor="middle" font-weight="normal">6s</text><path d="M1030.50 612.00 L1030.50 616.00" fill="none" stroke="#969696" stroke-width="1"/><text x="1089.8999999999999" y="623.5" font-size="9" fill="#c8c8c8" text-anchor="middle" font-weight="normal">7s</text><path d="M1090.50 612.00 L1090.50 616.00" fill="none" stroke="#969696" stroke-width="1"/><text x="1149.1999999999998" y="623.5" font-size="9" fill="#c8c8c8" text-anchor="middle" font-weight="normal">8s</text><path d="M1149.50 612.00 L1149.50 616.00" fill="none" stroke="#969696" stroke-width="1"/><text x="1208.5" y="623.5" font-size="9" fill="#c8c8c8" text-anchor="middle" font-weight="normal">9s</text><path d="M1208.50 612.00 L1208.50 616.00" fill="none" stroke="#969696" stroke-width="1"/><text x="1267.8" y="623.5" font-size="9" fill="#c8c8c8" text-anchor="middle" font-weight="normal">10s</text><path d="M1268.50 612.00 L1268.50 616.00" fill="none" stroke="#969696" stroke-width="1"/><path d="M675.5 41.97V76.63M676.5 45.47V74.49M677.5 48.85V69.93M678.5 41.97V72.62M679.5 43.76V75.27M680.5 49.69V73.77M681.5 51.00V67.56M682.5 46.23V70.19M683.5 47.07V71.53M684.5 47.59V71.01M685.5 51.05V69.01M686.5 49.32V66.24M687.5 47.97V67.78M688.5 48.78V70.67M689.5 50.70V72.21M690.5 48.67V70.05M691.5 48.22V67.04M692.5 47.36V69.20M693.5 48.53V70.36M694.5 50.22V66.23M695.5 50.78V68.04M696.5 48.59V70.48M697.5 48.06V70.52M698.5 51.34V67.05M699.5 48.59V70.07M700.5 49.30V70.44M701.5 51.79V70.43M702.5 50.78V68.05M703.5 49.00V68.61M704.5 49.05V69.55M705.5 49.65V69.31M706.5 51.43V66.89M707.5 49.06V67.93M708.5 49.42V69.97M709.5 51.32V69.47M710.5 49.00V67.68M711.5 49.04V65.34M712.5 49.60V69.07M713.5 50.83V68.61M714.5 49.20V67.81M715.5 49.58V68.95M716.5 51.97V69.27M717.5 51.36V65.29M718.5 49.23V69.21M719.5 49.13V69.47M720.5 50.61V69.41M721.5 54.25V66.78M722.5 50.39V66.13M723.5 49.26V68.79M724.5 49.67V69.35M725.5 52.66V69.30M726.5 51.11V67.79M727.5 49.38V67.39M728.5 52.01V68.87M729.5 51.00V68.66M730.5 49.42V66.48M731.5 49.34V68.23M732.5 49.39V68.80M733.5 50.50V66.89M734.5 50.28V67.53M735.5 49.45V69.15M736.5 49.42V69.18M737.5 49.68V68.75M738.5 52.00V67.18M739.5 49.43V67.64M740.5 49.42V69.18M741.5 49.46V69.14M742.5 53.12V69.17M743.5 49.50V66.02M744.5 49.45V65.40M745.5 49.44V69.15M746.5 49.46V69.02M747.5 51.12V67.61M748.5 50.91V68.69M749.5 49.46V69.14M750.5 49.48V68.46M751.5 49.47V67.02M752.5 52.37V69.12M753.5 53.26V69.12M754.5 50.15V67.59M755.5 49.49V66.85M756.5 49.48V68.64M757.5 49.53V69.11M758.5 52.62V67.82M759.5 49.55V66.92M760.5 49.49V69.11M761.5 51.21V69.12M762.5 51.13V66.49M763.5 49.49V68.26M764.5 49.49V69.11M765.5 49.49V69.11M766.5 50.82V69.11M767.5 51.85V65.53M768.5 49.50V68.63M769.5 49.49V69.11M770.5 52.36V69.11M771.5 53.83V69.11M772.5 50.56V64.49M773.5 49.49V68.83M774.5 51.17V69.10M775.5 53.33V65.74M776.5 50.58V67.59M777.5 49.72V69.10M778.5 54.54V69.10M779.5 49.50V69.10M780.5 49.50V65.71M781.5 49.50V66.91M782.5 49.50V69.10M783.5 52.16V69.10M784.5 51.45V69.10M785.5 49.50V67.96M786.5 49.50V67.70M787.5 49.50V69.10M788.5 51.39V69.10M789.5 51.63V68.99M790.5 49.51V67.50M791.5 49.77V67.90M792.5 51.24V69.10M793.5 51.07V68.63M794.5 49.60V66.40M795.5 51.93V67.32M796.5 54.23V69.10M797.5 50.66V67.50M798.5 49.50V66.32M799.5 49.50V68.51M800.5 51.20V69.10M801.5 52.88V69.10M802.5 50.47V67.50M803.5 50.24V64.47M804.5 51.58V67.43M805.5 49.84V69.10M806.5 49.50V69.08M807.5 49.50V68.18M808.5 51.40V67.96M809.5 52.95V68.85M810.5 49.50V69.10M811.5 49.76V69.10M812.5 50.99V67.25M813.5 50.12V65.99M814.5 49.50V68.71M815.5 49.84V68.63M816.5 51.15V66.99M817.5 49.83V68.00M818.5 49.50V69.10M819.5 49.50V69.10M820.5 49.85V66.58M821.5 51.92V68.17M822.5 51.71V69.10M823.5 49.64V69.10M824.5 49.50V69.10M825.5 50.19V66.43M826.5 52.51V66.92M827.5 51.61V69.10M828.5 49.50V69.10M829.5 49.50V68.56M830.5 53.24V67.25M831.5 51.88V67.99M832.5 49.50V69.10M833.5 49.50V68.38M834.5 52.10V66.96M835.5 52.86V67.85M836.5 50.01V69.00M837.5 49.50V67.68M838.5 50.11V67.53M839.5 51.86V68.84M840.5 51.25V68.91M841.5 49.50V67.79M842.5 49.50V69.10M843.5 53.33V68.63M844.5 49.97V66.21M845.5 49.50V67.14M846.5 50.14V69.10M847.5 50.94V66.91M848.5 49.50V65.21M849.5 49.50V68.20M850.5 49.99V68.20M851.5 52.13V64.05" stroke="#1414ff" stroke-width="1" fill="none" opacity="1"/><path d="M852.90 28.50 L854.10 49.30 L856.90 59.30 L854.10 69.30 L852.90 96.00 L852.00 69.30 L852.00 49.30 Z" fill="#1414ff"/><path d="M852.90 28.50V96.00" stroke="#1414ff" stroke-width="1.2"/><path d="M854.90 59.30 L1268.30 59.30" fill="none" stroke="#1010c0" stroke-width="2"/><rect x="675" y="115" width="593" height="67" fill="#00f400"/><path d="M677.0 115L678.6 115L677.8 135.6ZM679.4 182L681.0 182L680.3 161.5ZM682.0 115L683.6 115L682.9 132.6ZM684.7 182L686.3 182L685.6 161.6ZM686.9 115L688.5 115L687.8 141.3ZM689.2 182L690.8 182L690.1 167.5ZM691.9 115L693.5 115L692.8 125.2ZM694.5 182L696.1 182L695.3 159.1ZM697.9 115L699.5 115L698.7 127.5ZM699.9 182L701.5 182L700.7 167.2ZM703.9 115L705.5 115L704.7 132.8ZM707.3 182L708.9 182L708.1 161.2ZM709.6 115L711.2 115L710.5 137.8ZM712.7 182L714.3 182L713.6 166.8ZM714.6 115L716.2 115L715.5 131.9ZM717.3 182L718.9 182L718.1 170.4ZM720.0 115L721.6 115L720.9 135.5ZM722.1 182L723.7 182L722.9 170.5ZM724.9 115L726.5 115L725.7 129.1ZM728.3 182L729.9 182L729.2 172.5ZM729.7 115L731.3 115L730.6 127.0ZM732.4 182L734.0 182L733.2 172.7ZM735.2 115L736.8 115L736.0 126.9ZM737.4 182L739.0 182L738.3 158.7ZM740.0 115L741.6 115L740.9 135.1ZM742.5 182L744.1 182L743.4 165.5ZM746.2 115L747.8 115L747.0 126.9ZM749.5 182L751.1 182L750.4 156.9ZM752.0 115L753.6 115L752.8 124.9ZM754.9 182L756.5 182L755.8 162.2ZM758.0 115L759.6 115L758.9 127.8ZM761.5 182L763.1 182L762.3 157.0ZM762.8 115L764.4 115L763.6 129.7ZM764.6 182L766.2 182L765.5 158.0ZM769.1 115L770.7 115L770.0 141.8ZM771.9 182L773.5 182L772.8 161.0ZM775.0 115L776.6 115L775.8 134.3ZM778.4 182L780.0 182L779.2 162.1ZM780.1 115L781.7 115L781.0 133.2ZM782.0 182L783.6 182L782.8 160.0ZM786.0 115L787.6 115L786.9 131.6ZM789.3 182L790.9 182L790.1 159.4ZM791.2 115L792.8 115L792.0 125.4ZM793.2 182L794.8 182L794.1 169.7ZM796.3 115L797.9 115L797.1 132.1ZM799.7 182L801.3 182L800.5 168.0ZM802.6 115L804.2 115L803.4 136.2ZM805.8 182L807.4 182L806.7 165.7ZM807.1 115L808.7 115L808.0 138.2ZM809.3 182L810.9 182L810.2 170.4ZM813.2 115L814.8 115L814.1 136.4ZM815.4 182L817.0 182L816.2 168.2ZM819.6 115L821.2 115L820.4 128.8ZM822.6 182L824.2 182L823.4 170.7ZM825.7 115L827.3 115L826.6 126.1ZM828.4 182L830.0 182L829.2 172.4ZM831.3 115L832.9 115L832.2 139.2ZM833.3 182L834.9 182L834.1 168.1ZM837.3 115L838.9 115L838.2 134.9ZM839.7 182L841.3 182L840.5 161.7ZM842.7 115L844.3 115L843.6 139.5ZM845.0 182L846.6 182L845.9 159.4ZM848.5 115L850.1 115L849.4 137.3ZM851.0 182L852.6 182L851.8 160.0ZM854.4 115L856.0 115L855.3 131.0ZM856.3 182L857.9 182L857.1 155.7ZM860.3 115L861.9 115L861.2 127.7ZM863.4 182L865.0 182L864.2 168.0ZM865.8 115L867.4 115L866.6 139.5ZM868.3 182L869.9 182L869.2 167.8ZM870.9 115L872.5 115L871.7 125.4ZM873.1 182L874.7 182L873.9 168.1ZM875.7 115L877.3 115L876.6 125.1ZM878.3 182L879.9 182L879.2 169.1ZM881.7 115L883.3 115L882.6 140.6ZM884.0 182L885.6 182L884.8 162.7ZM887.2 115L888.8 115L888.1 125.4ZM889.2 182L890.8 182L890.1 157.1ZM892.7 115L894.3 115L893.5 138.5ZM894.6 182L896.2 182L895.4 162.3ZM898.9 115L900.5 115L899.8 139.6ZM900.7 182L902.3 182L901.6 163.6ZM904.1 115L905.7 115L905.0 137.7ZM906.1 182L907.7 182L906.9 168.2ZM910.3 115L911.9 115L911.1 132.5ZM912.8 182L914.4 182L913.7 155.6ZM915.4 115L917.0 115L916.3 124.8ZM917.9 182L919.5 182L918.7 170.2ZM920.1 115L921.7 115L920.9 134.2ZM923.5 182L925.1 182L924.3 162.6ZM925.9 115L927.5 115L926.7 129.8ZM928.6 182L930.2 182L929.5 159.5ZM931.6 115L933.2 115L932.4 138.5ZM934.3 182L935.9 182L935.1 169.4ZM937.2 115L938.8 115L938.1 132.8ZM939.3 182L940.9 182L940.1 161.9ZM943.3 115L944.9 115L944.2 126.4ZM946.1 182L947.7 182L946.9 159.8ZM948.7 115L950.3 115L949.5 128.9ZM951.1 182L952.7 182L951.9 163.2ZM954.5 115L956.1 115L955.4 134.1ZM956.5 182L958.1 182L957.4 158.3ZM960.9 115L962.5 115L961.7 125.8ZM963.1 182L964.7 182L964.0 169.9ZM967.1 115L968.7 115L967.9 140.4ZM969.0 182L970.6 182L969.8 167.0ZM972.0 115L973.6 115L972.8 132.5ZM975.3 182L976.9 182L976.2 171.7ZM976.8 115L978.4 115L977.7 132.8ZM979.5 182L981.1 182L980.3 159.6ZM982.2 115L983.8 115L983.0 126.5ZM984.6 182L986.2 182L985.4 155.3ZM988.2 115L989.8 115L989.0 126.1ZM991.4 182L993.0 182L992.2 167.4ZM994.2 115L995.8 115L995.1 124.2ZM997.5 182L999.1 182L998.4 170.1ZM999.7 115L1001.3 115L1000.5 135.9ZM1002.3 182L1003.9 182L1003.2 170.0ZM1004.4 115L1006.0 115L1005.3 129.1ZM1006.3 182L1007.9 182L1007.2 169.1ZM1009.2 115L1010.8 115L1010.0 132.4ZM1011.6 182L1013.2 182L1012.4 162.4ZM1014.3 115L1015.9 115L1015.1 124.6ZM1016.6 182L1018.2 182L1017.5 159.4ZM1019.3 115L1020.9 115L1020.1 131.3ZM1022.3 182L1023.9 182L1023.2 165.7ZM1025.5 115L1027.1 115L1026.4 140.5ZM1027.9 182L1029.5 182L1028.7 159.8ZM1030.5 115L1032.1 115L1031.4 126.5ZM1033.1 182L1034.7 182L1033.9 162.2ZM1036.9 115L1038.5 115L1037.8 126.6ZM1039.9 182L1041.5 182L1040.8 164.4ZM1041.7 115L1043.3 115L1042.5 141.5ZM1044.7 182L1046.3 182L1045.5 170.7ZM1048.0 115L1049.6 115L1048.8 125.9ZM1049.9 182L1051.5 182L1050.8 167.0ZM1054.4 115L1056.0 115L1055.2 124.6ZM1057.7 182L1059.3 182L1058.6 162.0ZM1059.0 115L1060.6 115L1059.9 134.2ZM1061.6 182L1063.2 182L1062.4 162.8ZM1065.0 115L1066.6 115L1065.8 136.2ZM1068.5 182L1070.1 182L1069.3 170.2ZM1071.1 115L1072.7 115L1072.0 131.4ZM1074.2 182L1075.8 182L1075.1 156.9ZM1077.6 115L1079.2 115L1078.4 128.8ZM1080.2 182L1081.8 182L1081.0 156.0ZM1084.0 115L1085.6 115L1084.8 130.7ZM1087.4 182L1089.0 182L1088.2 165.7ZM1089.2 115L1090.8 115L1090.1 137.6ZM1091.8 182L1093.4 182L1092.7 164.9ZM1094.5 115L1096.1 115L1095.3 131.8ZM1096.5 182L1098.1 182L1097.4 171.9ZM1100.5 115L1102.1 115L1101.4 134.2ZM1103.4 182L1105.0 182L1104.3 158.6ZM1105.5 115L1107.1 115L1106.3 128.2ZM1107.7 182L1109.3 182L1108.6 167.5ZM1111.5 115L1113.1 115L1112.3 130.7ZM1113.8 182L1115.4 182L1114.7 161.5ZM1116.4 115L1118.0 115L1117.2 125.9ZM1119.3 182L1120.9 182L1120.2 159.4ZM1121.5 115L1123.1 115L1122.3 135.4ZM1123.3 182L1124.9 182L1124.2 165.7ZM1127.1 115L1128.7 115L1128.0 128.6ZM1129.5 182L1131.1 182L1130.4 162.0ZM1132.8 115L1134.4 115L1133.6 126.8ZM1135.8 182L1137.4 182L1136.6 171.6ZM1139.2 115L1140.8 115L1140.1 127.6ZM1141.5 182L1143.1 182L1142.3 169.4ZM1145.7 115L1147.3 115L1146.6 129.2ZM1148.5 182L1150.1 182L1149.4 155.2ZM1152.1 115L1153.7 115L1153.0 124.8ZM1154.8 182L1156.4 182L1155.6 162.2ZM1158.0 115L1159.6 115L1158.9 130.0ZM1160.4 182L1162.0 182L1161.2 172.9ZM1162.6 115L1164.2 115L1163.4 133.9ZM1164.5 182L1166.1 182L1165.4 169.4ZM1167.8 115L1169.4 115L1168.6 125.3ZM1169.6 182L1171.2 182L1170.5 156.3ZM1173.1 115L1174.7 115L1174.0 127.7ZM1176.1 182L1177.7 182L1177.0 172.8ZM1178.1 115L1179.7 115L1179.0 141.3ZM1181.4 182L1183.0 182L1182.3 161.6ZM1182.8 115L1184.4 115L1183.7 129.7ZM1184.6 182L1186.2 182L1185.5 169.1ZM1187.4 115L1189.0 115L1188.2 126.3ZM1190.2 182L1191.8 182L1191.1 171.2ZM1192.2 115L1193.8 115L1193.0 140.3ZM1194.5 182L1196.1 182L1195.4 167.0ZM1196.8 115L1198.4 115L1197.7 138.3ZM1199.8 182L1201.4 182L1200.6 163.2ZM1202.6 115L1204.2 115L1203.4 125.8ZM1204.8 182L1206.4 182L1205.7 162.5ZM1209.0 115L1210.6 115L1209.8 138.7ZM1211.9 182L1213.5 182L1212.7 163.7ZM1213.5 115L1215.1 115L1214.4 140.0ZM1215.4 182L1217.0 182L1216.3 170.7ZM1219.4 115L1221.0 115L1220.2 138.6ZM1222.5 182L1224.1 182L1223.4 164.9ZM1224.2 115L1225.8 115L1225.1 124.6ZM1227.5 182L1229.1 182L1228.3 155.4ZM1229.2 115L1230.8 115L1230.1 139.6ZM1231.7 182L1233.3 182L1232.6 167.4ZM1234.7 115L1236.3 115L1235.6 124.1ZM1237.3 182L1238.9 182L1238.1 169.4ZM1240.7 115L1242.3 115L1241.5 133.0ZM1243.9 182L1245.5 182L1244.8 156.9ZM1245.8 115L1247.4 115L1246.7 129.0ZM1249.2 182L1250.8 182L1250.1 163.9ZM1250.5 115L1252.1 115L1251.3 124.8ZM1254.0 182L1255.6 182L1254.8 162.6ZM1255.1 115L1256.7 115L1256.0 133.2ZM1257.8 182L1259.4 182L1258.6 165.2ZM1261.5 115L1263.1 115L1262.4 141.1ZM1263.5 182L1265.1 182L1264.4 170.3Z" fill="#005a00" opacity="0.95"/><path d="M675.5 225.80V245.80M676.5 227.09V243.93M677.5 226.78V242.99M678.5 228.28V242.84M679.5 227.78V243.82M680.5 228.42V243.18M681.5 229.48V242.12M682.5 230.05V241.55M683.5 229.81V241.79M684.5 230.52V241.08M685.5 231.12V239.94M686.5 231.18V238.75M687.5 231.63V239.49M688.5 231.80V239.80M689.5 231.93V239.67M690.5 232.04V239.56M691.5 232.33V239.27M692.5 232.80V238.80M693.5 232.86V238.74M694.5 233.03V238.57M695.5 233.03V238.57M696.5 233.46V238.14M697.5 233.47V238.13M698.5 233.49V238.11M699.5 233.74V237.86M700.5 233.88V237.72M701.5 233.92V237.68M702.5 234.06V237.54M703.5 234.04V237.56M704.5 234.26V237.34M705.5 234.76V237.29M706.5 234.66V237.21M707.5 234.37V237.23M708.5 234.48V237.12M709.5 234.47V237.13M710.5 234.52V237.07M711.5 234.57V236.85M712.5 234.68V236.80M713.5 234.75V236.86M714.5 235.11V236.86M715.5 234.75V236.86M716.5 234.78V236.82M717.5 234.86V236.74M718.5 234.85V236.75M719.5 234.86V236.74M720.5 234.88V236.63M721.5 234.92V236.27M722.5 234.93V236.50M723.5 234.95V236.65M724.5 234.99V236.61M725.5 235.01V236.59M726.5 235.01V236.59M727.5 235.04V236.56M728.5 235.13V236.56M729.5 235.19V236.56M730.5 235.06V236.54M731.5 235.07V236.53M732.5 235.10V236.53M733.5 235.29V236.35M734.5 235.27V236.51M735.5 235.12V236.50M736.5 235.12V236.48M737.5 235.12V236.48M738.5 235.13V236.47M739.5 235.13V236.47M740.5 235.14V236.46M741.5 235.15V236.45M742.5 235.14V236.46M743.5 235.15V236.45M744.5 235.29V236.45M745.5 235.46V236.44M746.5 235.22V236.44M747.5 235.17V236.43M748.5 235.17V236.37M749.5 235.17V236.25M750.5 235.17V236.41M751.5 235.17V236.43M752.5 235.17V236.43M753.5 235.18V236.42M754.5 235.18V236.42M755.5 235.18V236.42M756.5 235.18V236.42M757.5 235.18V236.42M758.5 235.18V236.42M759.5 235.19V236.41M760.5 235.19V236.41M761.5 235.19V236.41M762.5 235.19V236.41M763.5 235.19V236.41M764.5 235.19V236.41M765.5 235.19V236.41M766.5 235.19V236.41M767.5 235.19V236.41M768.5 235.19V236.41M769.5 235.19V236.41M770.5 235.19V236.41M771.5 235.19V236.41M772.5 235.19V236.41M773.5 235.20V236.40M774.5 235.20V236.29M775.5 235.41V236.32M776.5 235.26V236.40M777.5 235.21V236.40M778.5 235.32V236.40M779.5 235.31V236.40M780.5 235.21V236.40M781.5 235.26V236.40M782.5 235.46V236.40M783.5 235.20V236.40M784.5 235.20V236.35M785.5 235.20V236.25M786.5 235.20V236.40M787.5 235.20V236.40M788.5 235.20V236.24M789.5 235.20V236.27M790.5 235.20V236.40M791.5 235.20V236.40M792.5 235.20V236.40M793.5 235.20V236.28M794.5 235.20V236.13M795.5 235.20V236.40M796.5 235.20V236.40M797.5 235.20V236.40M798.5 235.20V236.40M799.5 235.20V236.40M800.5 235.20V236.40M801.5 235.20V236.40M802.5 235.20V236.40M803.5 235.20V236.40M804.5 235.20V236.40M805.5 235.20V236.40M806.5 235.20V236.40M807.5 235.20V236.24M808.5 235.20V236.12M809.5 235.20V236.40M810.5 235.20V236.40M811.5 235.20V236.40M812.5 235.20V236.40M813.5 235.20V236.40M814.5 235.20V236.40M815.5 235.20V236.40M816.5 235.20V236.40M817.5 235.20V236.40M818.5 235.20V236.40M819.5 235.20V236.40M820.5 235.25V236.40M821.5 235.26V236.40M822.5 235.20V236.40M823.5 235.20V236.40M824.5 235.20V236.40M825.5 235.20V236.40M826.5 235.20V236.40M827.5 235.42V236.40M828.5 235.30V236.40M829.5 235.20V236.40M830.5 235.20V236.40M831.5 235.20V236.40M832.5 235.20V236.40M833.5 235.20V236.40M834.5 235.23V236.40M835.5 235.34V236.40M836.5 235.29V236.40M837.5 235.20V236.40M838.5 235.20V236.40M839.5 235.32V236.40M840.5 235.39V236.40M841.5 235.22V236.40M842.5 235.20V236.40M843.5 235.20V236.40M844.5 235.20V236.40M845.5 235.20V236.40M846.5 235.20V236.40M847.5 235.20V236.29M848.5 235.20V236.06M849.5 235.20V236.26M850.5 235.20V236.40M851.5 235.20V236.40" stroke="#00a000" stroke-width="1" fill="none" opacity="1"/><path d="M852.5 235.79V236.80M853.5 231.35V246.01M854.5 227.66V247.23M855.5 226.20V246.40M856.5 226.79V245.81M857.5 227.62V244.24M858.5 231.70V243.17M859.5 230.29V244.85M860.5 227.90V244.70M861.5 228.02V244.58M862.5 228.10V243.29M863.5 228.15V242.09M864.5 228.46V243.72M865.5 231.39V244.37M866.5 228.25V242.40M867.5 228.26V242.47M868.5 229.80V244.33M869.5 230.47V244.32M870.5 228.92V244.31M871.5 228.29V244.31M872.5 228.29V244.31M873.5 228.29V244.31M874.5 228.30V243.14M875.5 228.81V241.30M876.5 231.85V244.02M877.5 228.63V244.30M878.5 228.30V243.34M879.5 228.30V240.71M880.5 228.75V244.30M881.5 232.91V244.30M882.5 228.97V244.30M883.5 228.30V244.30M884.5 228.30V244.30M885.5 228.30V243.17M886.5 228.30V241.69M887.5 228.30V244.30M888.5 228.30V244.11M889.5 228.30V241.75M890.5 228.30V242.42M891.5 228.30V244.30M892.5 228.30V244.30M893.5 228.30V244.30M894.5 228.30V244.30M895.5 228.33V244.30M896.5 231.01V244.30M897.5 228.68V244.30M898.5 228.30V243.53M899.5 228.55V241.06M900.5 230.15V244.30M901.5 228.52V244.30M902.5 228.30V244.30M903.5 228.89V243.72M904.5 230.95V240.60M905.5 228.80V242.20M906.5 228.30V244.30M907.5 228.30V244.30M908.5 229.21V243.54M909.5 231.07V242.89M910.5 229.11V244.30M911.5 228.30V244.30M912.5 229.21V244.30M913.5 231.71V242.73M914.5 229.88V243.91M915.5 228.30V244.30M916.5 229.86V244.30M917.5 230.56V244.30M918.5 228.30V244.30M919.5 228.30V244.30M920.5 228.30V244.30M921.5 228.30V244.30M922.5 228.30V244.30M923.5 228.30V244.30M924.5 228.30V244.30M925.5 228.30V244.30M926.5 228.30V244.30M927.5 228.30V241.73M928.5 228.30V240.73M929.5 228.30V244.30M930.5 228.30V244.30M931.5 229.65V244.30M932.5 229.92V244.30M933.5 228.41V243.77M934.5 228.30V240.80M935.5 228.30V244.30M936.5 229.62V244.30M937.5 229.46V243.76M938.5 228.30V242.41M939.5 228.30V243.62M940.5 228.38V244.30M941.5 231.81V244.30M942.5 229.33V244.30M943.5 228.30V244.30M944.5 230.52V244.30M945.5 230.69V244.30M946.5 228.30V243.42M947.5 228.30V242.19M948.5 228.35V243.50M949.5 229.98V244.30M950.5 230.49V244.14M951.5 228.86V242.95M952.5 228.35V242.91M953.5 232.36V244.10M954.5 229.96V244.23M955.5 228.30V242.78M956.5 228.30V243.11M957.5 228.32V244.30M958.5 229.88V242.63M959.5 230.12V240.29M960.5 228.56V242.80M961.5 228.30V244.30M962.5 228.30V242.78M963.5 228.30V240.02M964.5 228.30V244.30M965.5 228.30V244.30M966.5 228.63V244.30M967.5 231.52V243.49M968.5 228.32V241.37M969.5 228.30V242.24M970.5 228.93V244.30M971.5 229.55V242.77M972.5 228.30V243.64M973.5 228.30V244.30M974.5 228.30V244.30M975.5 228.30V244.30M976.5 228.30V244.30M977.5 228.30V244.30M978.5 228.30V244.30M979.5 228.30V243.28M980.5 228.30V241.12M981.5 228.30V243.32M982.5 229.29V244.30M983.5 231.17V242.86M984.5 228.30V240.90M985.5 228.90V244.30M986.5 232.12V244.30M987.5 229.15V244.30M988.5 228.30V244.30M989.5 228.30V244.30M990.5 228.44V244.30M991.5 229.55V244.30M992.5 229.21V242.46M993.5 228.30V242.82M994.5 229.39V244.30M995.5 231.50V244.22M996.5 228.30V242.75M997.5 228.30V243.87M998.5 228.30V244.30M999.5 228.30V244.30M1000.5 232.48V244.30M1001.5 228.55V244.30M1002.5 228.30V244.30M1003.5 228.30V244.30M1004.5 231.00V244.30M1005.5 232.42V244.30M1006.5 228.91V244.30M1007.5 228.30V242.87M1008.5 228.30V242.60M1009.5 228.30V244.06M1010.5 228.30V244.30M1011.5 228.30V244.30M1012.5 230.46V244.16M1013.5 230.78V242.66M1014.5 228.32V244.07M1015.5 228.30V244.30M1016.5 228.30V244.30M1017.5 228.30V240.71M1018.5 228.30V242.01M1019.5 228.30V244.30M1020.5 228.30V244.30M1021.5 231.71V244.30M1022.5 229.17V244.30M1023.5 228.30V244.30M1024.5 229.23V244.30M1025.5 229.70V244.30M1026.5 228.53V244.30M1027.5 228.30V244.30M1028.5 228.30V243.18M1029.5 229.57V242.38M1030.5 231.81V243.74M1031.5 228.46V244.30M1032.5 228.30V244.30M1033.5 229.71V242.20M1034.5 231.83V241.59M1035.5 229.40V243.84M1036.5 229.06V244.30M1037.5 231.47V244.30M1038.5 229.67V244.30M1039.5 228.30V244.30M1040.5 228.30V244.30M1041.5 229.71V244.30M1042.5 231.92V243.12M1043.5 228.30V243.17M1044.5 228.57V244.30M1045.5 230.03V244.30M1046.5 230.07V244.30M1047.5 228.60V241.38M1048.5 228.30V242.23M1049.5 229.16V244.30M1050.5 231.84V244.30M1051.5 230.34V241.98M1052.5 228.30V239.86M1053.5 228.30V242.69M1054.5 228.30V244.30M1055.5 230.48V244.30M1056.5 230.68V244.25M1057.5 228.30V242.89M1058.5 228.30V243.46M1059.5 228.30V244.30M1060.5 228.30V244.30M1061.5 228.30V244.30M1062.5 228.30V244.30M1063.5 228.52V244.30M1064.5 233.32V243.22M1065.5 228.30V242.60M1066.5 228.30V244.27M1067.5 228.30V244.30M1068.5 228.30V244.30M1069.5 229.77V244.30M1070.5 228.39V244.30M1071.5 228.30V244.30M1072.5 228.30V244.30M1073.5 228.30V244.30M1074.5 228.30V244.30M1075.5 228.30V244.30M1076.5 228.30V244.30M1077.5 230.29V244.30M1078.5 231.16V244.30M1079.5 228.49V244.30M1080.5 228.30V244.30M1081.5 229.09V241.87M1082.5 231.79V242.48M1083.5 231.15V244.30M1084.5 228.45V241.99M1085.5 228.30V242.66M1086.5 229.71V244.30M1087.5 230.04V244.30M1088.5 228.30V244.30M1089.5 228.30V242.07M1090.5 232.22V243.01M1091.5 229.15V244.30M1092.5 228.30V244.30M1093.5 229.24V244.30M1094.5 231.75V244.30M1095.5 230.13V244.30M1096.5 228.47V244.30M1097.5 230.19V241.74M1098.5 229.26V242.24M1099.5 228.30V244.30M1100.5 228.30V244.30M1101.5 230.56V244.30M1102.5 229.52V242.46M1103.5 228.30V241.77M1104.5 228.30V244.07M1105.5 228.30V244.30M1106.5 228.30V244.30M1107.5 228.30V244.30M1108.5 228.30V244.30M1109.5 228.30V243.61M1110.5 229.81V242.02M1111.5 229.03V243.24M1112.5 228.30V244.30M1113.5 228.30V244.30M1114.5 228.30V244.30M1115.5 228.30V244.30M1116.5 228.30V244.30M1117.5 228.30V243.19M1118.5 228.30V241.91M1119.5 228.30V243.45M1120.5 228.30V244.30M1121.5 228.30V244.30M1122.5 228.30V241.95M1123.5 228.30V241.85M1124.5 228.30V244.30M1125.5 228.30V244.30M1126.5 228.30V244.30M1127.5 228.30V244.30M1128.5 230.90V244.30M1129.5 229.67V244.30M1130.5 228.30V244.30M1131.5 228.30V244.30M1132.5 228.30V242.48M1133.5 228.30V244.30M1134.5 228.30V244.30M1135.5 228.30V244.30M1136.5 230.43V243.77M1137.5 230.81V242.03M1138.5 228.30V244.23M1139.5 228.30V244.30M1140.5 228.30V244.30M1141.5 228.30V244.30M1142.5 228.30V244.30M1143.5 228.30V243.37M1144.5 228.30V241.19M1145.5 228.30V242.70M1146.5 228.30V244.30M1147.5 230.14V244.30M1148.5 229.51V244.30M1149.5 228.30V244.30M1150.5 228.30V244.30M1151.5 229.91V242.08M1152.5 229.13V242.36M1153.5 228.30V244.30M1154.5 230.97V244.30M1155.5 230.98V244.30M1156.5 228.39V244.30M1157.5 229.63V244.30M1158.5 229.67V244.30M1159.5 228.42V244.30M1160.5 228.30V242.02M1161.5 229.71V243.16M1162.5 232.46V244.30M1163.5 230.19V244.30M1164.5 228.30V244.30M1165.5 228.30V244.30M1166.5 228.66V244.30M1167.5 232.88V244.30M1168.5 228.57V244.30M1169.5 228.30V244.30M1170.5 229.47V244.30M1171.5 233.03V244.30M1172.5 228.96V243.39M1173.5 228.30V242.45M1174.5 228.65V244.30M1175.5 231.92V244.30M1176.5 229.04V243.31M1177.5 228.30V240.20M1178.5 228.48V242.16M1179.5 231.70V244.30M1180.5 228.49V244.30M1181.5 228.30V242.91M1182.5 228.30V240.14M1183.5 229.46V242.70M1184.5 231.83V244.30M1185.5 229.41V244.30M1186.5 228.30V244.30M1187.5 228.30V244.30M1188.5 228.30V244.30M1189.5 228.30V244.30M1190.5 228.30V244.30M1191.5 228.30V242.69M1192.5 228.30V242.18M1193.5 228.62V244.30M1194.5 230.65V244.30M1195.5 228.30V242.80M1196.5 228.30V240.40M1197.5 228.30V244.23M1198.5 229.80V243.45M1199.5 231.06V241.66M1200.5 228.30V243.55M1201.5 228.30V244.30M1202.5 229.93V244.30M1203.5 230.45V244.30M1204.5 228.56V244.30M1205.5 228.30V244.30M1206.5 228.30V244.30M1207.5 230.13V244.30M1208.5 230.41V244.30M1209.5 228.57V244.30M1210.5 230.31V244.30M1211.5 231.43V244.30M1212.5 228.30V244.30M1213.5 229.21V244.30M1214.5 231.99V244.30M1215.5 229.75V244.30M1216.5 228.30V243.62M1217.5 228.42V242.85M1218.5 231.36V244.06M1219.5 230.93V244.30M1220.5 228.30V244.30M1221.5 228.30V244.30M1222.5 229.48V244.30M1223.5 232.47V244.30M1224.5 231.05V244.30M1225.5 228.30V244.30M1226.5 228.30V244.30M1227.5 229.99V243.50M1228.5 231.12V240.10M1229.5 228.35V244.22M1230.5 228.30V244.30M1231.5 228.98V244.30M1232.5 232.54V244.05M1233.5 228.98V241.01M1234.5 228.30V242.37M1235.5 228.30V244.30M1236.5 229.54V244.30M1237.5 233.17V244.30M1238.5 229.16V244.30M1239.5 228.30V244.30M1240.5 229.31V244.30M1241.5 229.18V244.29M1242.5 228.30V242.18M1243.5 228.30V244.30M1244.5 230.84V243.27M1245.5 232.69V241.19M1246.5 229.60V242.62M1247.5 228.30V244.30M1248.5 228.30V244.30M1249.5 228.49V243.21M1250.5 231.57V241.03M1251.5 229.34V243.31M1252.5 228.30V244.30M1253.5 229.80V244.30M1254.5 229.98V241.93M1255.5 228.40V241.53M1256.5 228.30V244.30M1257.5 228.52V244.30M1258.5 231.86V244.30M1259.5 230.15V243.22M1260.5 228.30V243.22M1261.5 228.30V244.30M1262.5 229.60V244.30M1263.5 231.88V244.30M1264.5 229.61V243.45M1265.5 229.85V242.77M1266.5 232.31V244.13M1267.5 230.15V244.30" stroke="#00a000" stroke-width="1" fill="none" opacity="1"/><path d="M852.90 199.00 L854.10 224.00 L856.90 236.00 L854.10 248.00 L852.90 265.00 L852.00 248.00 L852.00 224.00 Z" fill="#00a000"/><path d="M852.90 199.00V265.00" stroke="#00a000" stroke-width="1.2"/><path d="M675.5 310.57V330.91M676.5 311.92V327.43M677.5 311.66V330.36M678.5 312.71V329.89M679.5 313.00V328.71M680.5 314.23V326.43M681.5 314.01V328.59M682.5 315.33V327.27M683.5 316.24V327.24M684.5 319.07V325.20M685.5 316.93V325.68M686.5 316.30V326.30M687.5 317.07V325.53M688.5 317.15V325.45M689.5 317.52V325.08M690.5 317.57V325.18M691.5 318.64V324.58M692.5 318.15V324.49M693.5 318.09V324.51M694.5 318.38V324.25M695.5 319.81V324.08M696.5 319.11V324.01M697.5 319.03V323.57M698.5 318.98V323.62M699.5 319.27V323.51M700.5 319.72V323.40M701.5 319.60V323.28M702.5 319.55V323.05M703.5 319.64V322.96M704.5 320.02V323.00M705.5 320.22V322.90M706.5 319.83V322.77M707.5 319.93V322.67M708.5 319.92V322.68M709.5 320.03V322.57M710.5 320.01V322.59M711.5 320.10V322.50M712.5 320.10V322.50M713.5 320.21V322.39M714.5 320.21V322.39M715.5 320.46V322.28M716.5 320.88V322.15M717.5 320.53V322.20M718.5 320.36V322.24M719.5 320.34V322.02M720.5 320.46V321.97M721.5 320.60V322.17M722.5 320.42V322.18M723.5 320.46V322.14M724.5 320.51V322.14M725.5 320.73V322.10M726.5 320.49V322.11M727.5 320.53V322.07M728.5 320.53V322.07M729.5 320.55V322.05M730.5 320.56V322.04M731.5 320.56V322.04M732.5 320.59V322.01M733.5 320.59V322.01M734.5 320.60V322.00M735.5 320.60V321.75M736.5 320.61V321.70M737.5 320.62V321.98M738.5 320.62V321.98M739.5 320.63V321.97M740.5 320.63V321.97M741.5 320.64V321.96M742.5 320.64V321.96M743.5 320.65V321.95M744.5 320.90V321.95M745.5 320.69V321.94M746.5 320.66V321.94M747.5 320.66V321.94M748.5 320.67V321.93M749.5 320.67V321.93M750.5 320.67V321.93M751.5 320.67V321.93M752.5 320.90V321.92M753.5 320.76V321.81M754.5 320.68V321.82M755.5 320.68V321.92M756.5 320.68V321.92M757.5 320.68V321.92M758.5 320.68V321.92M759.5 320.68V321.92M760.5 320.69V321.91M761.5 320.76V321.91M762.5 320.83V321.91M763.5 320.74V321.91M764.5 320.69V321.91M765.5 320.69V321.91M766.5 320.69V321.91M767.5 320.69V321.91M768.5 320.69V321.91M769.5 320.69V321.91M770.5 320.69V321.91M771.5 320.69V321.84M772.5 320.69V321.77M773.5 320.69V321.91M774.5 320.69V321.91M775.5 320.70V321.70M776.5 320.70V321.84M777.5 320.70V321.90M778.5 320.70V321.76M779.5 320.75V321.64M780.5 320.88V321.84M781.5 320.70V321.90M782.5 320.70V321.90M783.5 320.70V321.90M784.5 320.70V321.90M785.5 320.70V321.85M786.5 320.70V321.66M787.5 320.70V321.72M788.5 320.70V321.90M789.5 320.70V321.90M790.5 320.70V321.90M791.5 320.70V321.90M792.5 320.83V321.90M793.5 320.89V321.90M794.5 320.72V321.90M795.5 320.70V321.90M796.5 320.70V321.90M797.5 320.70V321.90M798.5 320.70V321.86M799.5 320.70V321.70M800.5 320.70V321.74M801.5 320.70V321.90M802.5 320.70V321.90M803.5 320.70V321.90M804.5 320.70V321.90M805.5 320.78V321.90M806.5 321.01V321.90M807.5 320.88V321.90M808.5 320.70V321.90M809.5 320.70V321.90M810.5 320.70V321.90M811.5 320.70V321.90M812.5 320.70V321.90M813.5 320.70V321.90M814.5 320.70V321.90M815.5 320.70V321.90M816.5 320.70V321.90M817.5 320.70V321.90M818.5 320.70V321.90M819.5 320.70V321.90M820.5 320.70V321.90M821.5 320.70V321.90M822.5 320.70V321.90M823.5 320.70V321.90M824.5 320.70V321.90M825.5 320.70V321.72M826.5 320.70V321.79M827.5 320.70V321.90M828.5 320.70V321.90M829.5 320.70V321.90M830.5 320.70V321.90M831.5 320.93V321.90M832.5 320.85V321.90M833.5 320.70V321.90M834.5 320.70V321.90M835.5 320.70V321.90M836.5 320.70V321.90M837.5 320.70V321.90M838.5 320.70V321.90M839.5 320.70V321.90M840.5 320.70V321.90M841.5 320.70V321.76M842.5 320.70V321.76M843.5 320.70V321.90M844.5 320.70V321.90M845.5 320.70V321.90M846.5 320.70V321.90M847.5 320.70V321.90M848.5 320.70V321.90M849.5 320.70V321.90M850.5 320.70V321.90M851.5 320.70V321.90" stroke="#ff1414" stroke-width="1" fill="none" opacity="1"/><path d="M852.5 320.43V321.60M853.5 314.47V332.89M854.5 312.51V327.59M855.5 311.10V328.73M856.5 311.69V330.31M857.5 312.12V329.88M858.5 312.43V329.57M859.5 313.00V327.99M860.5 315.44V327.66M861.5 312.92V329.08M862.5 313.00V329.00M863.5 314.44V328.26M864.5 316.11V326.25M865.5 314.16V328.33M866.5 313.15V328.85M867.5 313.16V328.84M868.5 313.92V326.81M869.5 315.13V325.40M870.5 313.53V327.87M871.5 313.19V328.81M872.5 313.19V328.81M873.5 315.27V328.81M874.5 315.61V328.80M875.5 313.27V328.80M876.5 313.20V328.80M877.5 313.20V327.59M878.5 313.20V324.46M879.5 313.20V326.85M880.5 313.20V328.80M881.5 313.20V328.80M882.5 313.20V328.00M883.5 313.20V327.11M884.5 313.20V328.69M885.5 313.20V327.37M886.5 314.38V324.76M887.5 314.48V327.84M888.5 313.20V328.80M889.5 313.20V328.80M890.5 313.20V327.24M891.5 313.20V323.94M892.5 313.20V327.51M893.5 313.20V328.80M894.5 313.20V327.93M895.5 313.20V326.63M896.5 313.79V327.97M897.5 315.94V328.80M898.5 313.20V328.80M899.5 313.20V328.80M900.5 313.20V328.80M901.5 313.20V328.80M902.5 313.20V328.34M903.5 313.20V326.54M904.5 313.20V326.85M905.5 315.41V328.66M906.5 313.42V326.97M907.5 313.20V326.27M908.5 313.20V328.80M909.5 313.20V328.80M910.5 315.36V325.80M911.5 314.83V327.64M912.5 313.20V328.80M913.5 313.20V328.80M914.5 313.20V327.46M915.5 315.25V326.83M916.5 314.60V328.65M917.5 313.20V328.80M918.5 313.20V328.80M919.5 314.01V328.55M920.5 315.30V326.92M921.5 313.74V328.37M922.5 313.20V328.80M923.5 313.20V328.80M924.5 315.88V328.80M925.5 317.19V328.80M926.5 314.17V328.80M927.5 313.20V328.80M928.5 313.20V327.96M929.5 313.71V326.82M930.5 314.96V328.80M931.5 313.85V328.80M932.5 313.20V327.66M933.5 313.20V324.60M934.5 315.33V327.50M935.5 315.75V328.80M936.5 313.20V328.80M937.5 313.20V328.80M938.5 316.04V328.80M939.5 313.38V328.80M940.5 313.20V328.80M941.5 314.01V328.43M942.5 315.84V325.83M943.5 314.41V327.86M944.5 313.20V328.80M945.5 313.20V328.80M946.5 314.41V328.80M947.5 315.18V328.80M948.5 313.20V328.80M949.5 313.20V328.80M950.5 313.20V327.67M951.5 313.20V326.27M952.5 313.20V328.38M953.5 313.20V328.80M954.5 313.20V328.80M955.5 315.36V328.80M956.5 318.09V328.80M957.5 315.07V328.80M958.5 313.20V328.80M959.5 313.20V328.80M960.5 313.64V328.80M961.5 315.24V328.80M962.5 313.96V328.80M963.5 313.20V328.80M964.5 313.20V328.80M965.5 313.38V327.69M966.5 315.82V325.41M967.5 315.16V327.51M968.5 313.20V328.80M969.5 314.80V327.49M970.5 317.07V324.95M971.5 314.25V328.80M972.5 313.20V328.80M973.5 313.20V327.79M974.5 313.76V325.96M975.5 314.70V328.80M976.5 313.56V328.80M977.5 313.20V328.80M978.5 313.20V327.32M979.5 315.31V325.23M980.5 317.25V327.65M981.5 314.07V328.80M982.5 313.20V328.62M983.5 313.20V325.52M984.5 313.20V326.57M985.5 314.75V328.80M986.5 313.42V327.76M987.5 313.20V326.30M988.5 313.20V328.52M989.5 313.20V328.80M990.5 313.20V327.49M991.5 313.20V327.48M992.5 313.20V328.80M993.5 313.20V328.80M994.5 313.51V327.21M995.5 315.71V328.53M996.5 313.34V328.80M997.5 313.20V327.96M998.5 313.20V326.26M999.5 314.56V327.78M1000.5 315.32V328.80M1001.5 313.20V328.80M1002.5 314.07V328.80M1003.5 314.62V328.80M1004.5 313.20V328.80M1005.5 314.49V328.48M1006.5 316.03V327.05M1007.5 313.66V328.68M1008.5 313.20V328.80M1009.5 313.20V328.80M1010.5 313.20V327.75M1011.5 313.20V325.57M1012.5 313.20V328.23M1013.5 313.20V328.80M1014.5 313.20V328.80M1015.5 313.20V328.80M1016.5 313.20V328.80M1017.5 313.20V328.80M1018.5 313.20V328.80M1019.5 313.20V328.80M1020.5 314.02V326.77M1021.5 314.23V326.67M1022.5 313.20V328.80M1023.5 313.20V328.80M1024.5 313.20V328.80M1025.5 315.15V328.23M1026.5 313.57V325.17M1027.5 313.20V328.20M1028.5 313.53V328.80M1029.5 315.00V328.80M1030.5 314.03V328.01M1031.5 313.20V326.71M1032.5 313.20V328.25M1033.5 315.55V328.80M1034.5 316.94V328.79M1035.5 314.14V325.17M1036.5 313.20V328.70M1037.5 313.20V328.80M1038.5 314.00V328.05M1039.5 314.37V324.24M1040.5 313.21V327.64M1041.5 313.83V328.80M1042.5 316.93V328.80M1043.5 314.49V327.69M1044.5 313.20V325.72M1045.5 313.55V327.22M1046.5 314.73V328.80M1047.5 314.15V328.80M1048.5 313.20V328.80M1049.5 313.20V328.80M1050.5 313.20V328.80M1051.5 313.20V328.80M1052.5 313.20V328.80M1053.5 313.20V327.69M1054.5 313.20V326.05M1055.5 313.20V328.24M1056.5 313.20V328.80M1057.5 313.20V328.80M1058.5 313.20V324.73M1059.5 313.20V328.80M1060.5 313.20V328.80M1061.5 313.20V328.80M1062.5 313.20V328.80M1063.5 314.28V328.80M1064.5 317.16V328.80M1065.5 314.58V328.80M1066.5 313.20V327.39M1067.5 313.39V328.15M1068.5 316.86V328.80M1069.5 313.39V328.80M1070.5 313.20V328.80M1071.5 315.36V327.38M1072.5 314.12V326.52M1073.5 313.20V328.80M1074.5 313.20V328.80M1075.5 313.20V328.80M1076.5 313.20V326.57M1077.5 313.20V324.81M1078.5 313.20V328.62M1079.5 313.20V328.80M1080.5 313.20V327.23M1081.5 313.20V327.41M1082.5 313.20V328.80M1083.5 313.20V328.80M1084.5 313.20V328.80M1085.5 313.20V327.03M1086.5 313.20V324.30M1087.5 313.55V327.46M1088.5 314.92V328.80M1089.5 313.59V328.17M1090.5 313.20V326.71M1091.5 313.20V327.40M1092.5 313.90V328.80M1093.5 316.90V328.80M1094.5 316.21V328.80M1095.5 313.20V328.80M1096.5 313.20V328.80M1097.5 314.30V327.41M1098.5 314.01V325.83M1099.5 313.20V328.80M1100.5 313.20V328.80M1101.5 313.20V328.80M1102.5 314.18V327.22M1103.5 316.76V324.00M1104.5 313.20V327.28M1105.5 313.20V328.80M1106.5 313.20V328.80M1107.5 314.89V328.80M1108.5 313.35V328.80M1109.5 313.75V328.80M1110.5 315.68V328.80M1111.5 314.68V328.80M1112.5 313.20V328.80M1113.5 313.20V328.80M1114.5 314.66V328.80M1115.5 314.29V327.39M1116.5 313.20V326.83M1117.5 313.20V328.80M1118.5 313.20V328.80M1119.5 313.20V328.54M1120.5 313.20V327.02M1121.5 313.20V328.80M1122.5 313.20V328.80M1123.5 313.20V328.80M1124.5 313.20V326.98M1125.5 313.20V326.41M1126.5 317.73V328.80M1127.5 314.08V328.80M1128.5 313.20V328.80M1129.5 314.30V327.73M1130.5 316.48V325.11M1131.5 313.87V328.71M1132.5 313.20V328.80M1133.5 314.61V328.69M1134.5 317.08V325.24M1135.5 315.11V326.45M1136.5 313.88V328.80M1137.5 316.20V328.80M1138.5 314.67V328.77M1139.5 313.20V325.84M1140.5 314.45V327.98M1141.5 316.45V328.59M1142.5 314.46V326.30M1143.5 313.20V327.85M1144.5 315.61V328.80M1145.5 317.59V328.80M1146.5 314.52V328.80M1147.5 313.20V327.43M1148.5 315.03V327.25M1149.5 315.43V328.75M1150.5 313.55V328.80M1151.5 313.20V328.80M1152.5 313.22V328.80M1153.5 316.50V328.80M1154.5 313.92V328.80M1155.5 313.20V328.80M1156.5 313.20V328.80M1157.5 313.20V328.80M1158.5 313.20V328.80M1159.5 313.66V328.80M1160.5 314.82V327.59M1161.5 314.34V327.82M1162.5 313.20V328.80M1163.5 313.20V328.80M1164.5 313.20V328.18M1165.5 316.48V326.19M1166.5 315.39V328.80M1167.5 313.20V328.80M1168.5 313.20V328.13M1169.5 313.20V327.34M1170.5 313.20V328.51M1171.5 313.20V328.80M1172.5 313.20V328.80M1173.5 313.20V326.42M1174.5 313.20V325.68M1175.5 313.20V328.18M1176.5 313.20V328.80M1177.5 313.20V328.80M1178.5 314.07V328.80M1179.5 317.60V328.80M1180.5 314.55V328.18M1181.5 313.20V325.58M1182.5 316.85V328.09M1183.5 314.77V328.80M1184.5 313.20V328.80M1185.5 313.20V326.64M1186.5 317.91V328.07M1187.5 313.24V328.80M1188.5 313.20V326.35M1189.5 313.20V325.52M1190.5 314.63V328.80M1191.5 315.18V328.80M1192.5 313.44V328.80M1193.5 313.20V328.80M1194.5 313.20V328.80M1195.5 314.86V328.69M1196.5 313.92V326.70M1197.5 313.20V328.23M1198.5 314.79V328.80M1199.5 317.08V328.80M1200.5 313.77V328.80M1201.5 313.20V324.73M1202.5 314.60V327.10M1203.5 314.59V328.80M1204.5 313.20V328.80M1205.5 313.20V327.89M1206.5 314.48V326.29M1207.5 314.83V327.49M1208.5 313.26V328.80M1209.5 313.20V328.80M1210.5 313.20V328.07M1211.5 313.20V327.02M1212.5 313.20V328.70M1213.5 313.20V327.33M1214.5 313.20V326.11M1215.5 313.20V327.91M1216.5 313.20V328.80M1217.5 313.20V328.80M1218.5 313.20V327.68M1219.5 313.20V328.05M1220.5 313.20V328.80M1221.5 313.20V328.55M1222.5 313.20V325.23M1223.5 313.20V328.80M1224.5 314.27V328.80M1225.5 314.18V328.80M1226.5 313.20V328.30M1227.5 313.20V327.62M1228.5 315.96V328.80M1229.5 317.00V328.80M1230.5 313.82V328.80M1231.5 313.20V328.80M1232.5 313.20V328.80M1233.5 313.20V328.80M1234.5 313.20V328.80M1235.5 313.20V327.47M1236.5 313.20V326.89M1237.5 314.49V328.80M1238.5 314.13V328.80M1239.5 313.20V328.80M1240.5 313.20V328.80M1241.5 313.20V328.09M1242.5 315.46V325.91M1243.5 315.24V326.80M1244.5 313.20V328.80M1245.5 314.81V328.80M1246.5 317.70V328.12M1247.5 314.83V327.58M1248.5 313.20V328.80M1249.5 313.20V328.80M1250.5 313.20V328.80M1251.5 315.71V327.21M1252.5 315.04V327.17M1253.5 313.20V328.78M1254.5 313.20V328.80M1255.5 313.20V328.80M1256.5 314.08V326.28M1257.5 315.34V325.79M1258.5 313.20V328.80M1259.5 313.20V328.80M1260.5 315.08V328.80M1261.5 313.72V327.89M1262.5 313.20V324.48M1263.5 313.20V328.80M1264.5 313.20V328.80M1265.5 315.75V328.80M1266.5 315.16V328.80M1267.5 313.20V324.86" stroke="#ff1414" stroke-width="1" fill="none" opacity="1"/><path d="M852.90 284.60 L854.10 309.00 L856.90 321.00 L854.10 333.00 L852.90 350.80 L852.00 333.00 L852.00 309.00 Z" fill="#ff1414"/><path d="M852.90 284.60V350.80" stroke="#ff1414" stroke-width="1.2"/><path d="M675.5 381.42V412.41M676.5 385.83V409.08M677.5 391.54V411.53M678.5 388.07V410.75M679.5 382.94V414.46M680.5 383.27V413.00M681.5 392.83V404.76M682.5 385.14V411.61M683.5 387.42V409.98M684.5 386.76V411.04M685.5 390.65V407.92M686.5 391.45V406.24M687.5 386.34V411.21M688.5 385.79V409.52M689.5 390.60V407.19M690.5 389.26V410.74M691.5 387.39V408.74M692.5 390.00V404.49M693.5 390.29V406.63M694.5 387.53V409.87M695.5 387.04V410.36M696.5 387.34V408.44M697.5 390.09V406.59M698.5 392.91V408.82M699.5 389.44V408.12M700.5 388.32V404.71M701.5 390.33V407.37M702.5 389.05V409.17M703.5 387.90V408.78M704.5 390.33V407.27M705.5 390.54V409.04M706.5 388.47V408.93M707.5 389.67V409.22M708.5 391.66V408.23M709.5 388.61V404.11M710.5 388.95V408.99M711.5 392.61V409.07M712.5 388.60V408.80M713.5 388.62V408.78M714.5 388.69V403.58M715.5 389.18V408.22M716.5 391.05V408.88M717.5 389.56V407.73M718.5 388.64V404.72M719.5 388.65V406.69M720.5 390.39V408.63M721.5 391.02V408.33M722.5 388.76V403.70M723.5 388.78V408.62M724.5 393.42V408.75M725.5 391.06V408.59M726.5 388.78V408.34M727.5 388.75V405.56M728.5 390.41V407.96M729.5 393.59V408.56M730.5 391.09V408.65M731.5 388.83V406.01M732.5 389.93V402.80M733.5 390.48V406.99M734.5 388.78V408.62M735.5 389.56V408.61M736.5 392.73V408.56M737.5 392.43V405.66M738.5 389.29V407.26M739.5 388.86V408.54M740.5 388.82V407.56M741.5 391.92V406.52M742.5 391.98V408.55M743.5 388.87V407.82M744.5 388.87V404.82M745.5 388.88V408.00M746.5 392.53V408.55M747.5 391.34V408.52M748.5 388.86V408.54M749.5 390.01V406.80M750.5 393.68V407.21M751.5 389.99V408.52M752.5 388.87V408.53M753.5 388.89V408.07M754.5 391.42V403.16M755.5 392.24V405.41M756.5 388.88V408.52M757.5 388.88V405.62M758.5 390.70V403.79M759.5 389.72V407.63M760.5 388.89V408.38M761.5 390.18V406.21M762.5 390.43V405.91M763.5 389.06V408.08M764.5 388.89V408.51M765.5 388.89V408.51M766.5 392.88V407.52M767.5 390.40V405.86M768.5 388.90V408.50M769.5 388.89V407.70M770.5 389.92V406.09M771.5 392.72V407.71M772.5 391.19V408.50M773.5 388.89V408.34M774.5 388.90V405.92M775.5 390.10V406.95M776.5 393.71V408.51M777.5 388.90V407.17M778.5 389.25V404.06M779.5 391.06V405.96M780.5 390.80V408.50M781.5 388.98V408.50M782.5 388.90V407.69M783.5 388.99V406.05M784.5 392.11V407.05M785.5 392.01V408.50M786.5 388.90V408.50M787.5 391.97V408.50M788.5 395.15V405.74M789.5 391.17V404.61M790.5 388.90V407.98M791.5 388.90V408.50M792.5 389.81V408.50M793.5 391.80V408.50M794.5 390.20V402.40M795.5 389.56V408.36M796.5 393.00V408.50M797.5 390.96V408.50M798.5 388.90V406.51M799.5 388.90V407.56M800.5 388.90V408.50M801.5 392.91V408.50M802.5 392.21V405.95M803.5 388.90V405.36M804.5 388.90V408.50M805.5 390.80V408.50M806.5 394.19V408.01M807.5 388.96V406.25M808.5 389.75V408.50M809.5 391.88V408.50M810.5 390.89V408.50M811.5 388.90V407.11M812.5 388.95V404.33M813.5 391.13V407.21M814.5 390.75V408.07M815.5 388.90V406.78M816.5 388.90V407.18M817.5 388.90V407.94M818.5 391.36V405.71M819.5 389.11V406.37M820.5 388.90V408.50M821.5 391.54V407.84M822.5 391.58V405.99M823.5 388.93V408.50M824.5 389.71V407.64M825.5 392.11V404.86M826.5 390.86V407.53M827.5 388.90V408.50M828.5 388.90V408.50M829.5 393.62V405.35M830.5 392.97V402.11M831.5 388.90V406.27M832.5 388.90V408.50M833.5 391.65V408.50M834.5 391.63V408.20M835.5 388.90V405.63M836.5 388.90V407.74M837.5 389.76V408.50M838.5 390.63V406.34M839.5 388.90V404.78M840.5 388.90V408.50M841.5 388.90V408.50M842.5 390.27V408.50M843.5 393.55V406.16M844.5 390.93V406.39M845.5 388.90V408.50M846.5 388.92V408.50M847.5 390.76V406.80M848.5 390.96V404.79M849.5 389.12V408.50M850.5 388.90V408.50M851.5 395.18V408.50" stroke="#18c0c0" stroke-width="1" fill="none" opacity="1"/><path d="M852.90 368.00 L854.10 388.70 L856.90 398.70 L854.10 408.70 L852.90 436.00 L852.00 408.70 L852.00 388.70 Z" fill="#18c0c0"/><path d="M852.90 368.00V436.00" stroke="#18c0c0" stroke-width="1.2"/><path d="M854.90 398.70 L1268.30 398.70" fill="none" stroke="#18c0c0" stroke-width="1.3"/><path d="M675.5 568.69V580.71M676.5 568.20V579.85M677.5 568.97V579.21M678.5 570.89V580.12M679.5 568.46V580.94M680.5 569.24V579.75M681.5 569.09V579.04M682.5 569.35V579.39M683.5 569.45V579.95M684.5 569.49V579.12M685.5 569.76V578.71M686.5 570.03V579.79M687.5 570.93V579.46M688.5 570.42V578.67M689.5 569.85V578.80M690.5 569.83V579.57M691.5 569.78V579.62M692.5 569.75V579.65M693.5 569.94V579.46M694.5 569.85V579.55M695.5 569.92V579.48M696.5 570.00V579.40M697.5 570.02V579.38M698.5 569.95V579.45M699.5 570.02V579.38M700.5 570.44V579.36M701.5 571.18V579.39M702.5 570.48V578.86M703.5 570.02V579.06M704.5 570.05V579.35M705.5 570.06V579.34M706.5 571.52V579.12M707.5 571.36V578.52M708.5 570.06V579.05M709.5 570.06V579.34M710.5 570.08V579.32M711.5 570.79V579.32M712.5 570.82V578.18M713.5 570.09V578.09M714.5 570.08V579.32M715.5 570.08V579.32M716.5 570.82V579.10M717.5 572.24V577.23M718.5 570.85V579.27M719.5 570.09V579.31M720.5 570.81V579.31M721.5 571.76V578.58M722.5 570.09V578.73M723.5 570.15V579.30M724.5 571.35V579.30M725.5 570.38V579.30M726.5 570.10V579.30M727.5 570.10V579.30M728.5 570.10V579.30M729.5 570.10V579.30M730.5 570.10V578.79M731.5 570.10V577.63M732.5 570.10V579.30M733.5 570.71V579.30M734.5 570.29V578.43M735.5 570.10V577.72M736.5 570.21V579.30M737.5 571.32V579.30M738.5 570.37V579.30M739.5 570.10V579.30M740.5 570.10V579.30M741.5 571.42V579.30M742.5 570.52V578.14M743.5 570.10V578.52M744.5 570.34V579.30M745.5 571.66V578.81M746.5 570.87V577.75M747.5 570.10V579.30M748.5 570.15V579.30M749.5 570.90V579.30M750.5 570.87V578.58M751.5 570.12V578.53M752.5 570.10V579.30M753.5 570.10V579.30M754.5 570.81V578.67M755.5 570.17V577.96M756.5 570.10V579.21M757.5 570.10V579.30M758.5 570.58V579.30M759.5 571.64V579.30M760.5 570.83V579.30M761.5 570.10V578.99M762.5 570.10V577.85M763.5 570.10V578.40M764.5 570.10V579.30M765.5 570.10V579.30M766.5 570.10V579.25M767.5 570.10V578.04M768.5 570.65V578.34M769.5 571.54V579.30M770.5 570.56V579.30M771.5 570.10V579.28M772.5 570.70V578.44M773.5 570.26V578.54M774.5 570.10V579.30M775.5 571.15V579.30M776.5 570.99V578.50M777.5 570.10V578.70M778.5 570.10V579.30M779.5 570.10V579.30M780.5 570.10V578.80M781.5 570.10V579.04M782.5 570.10V579.30M783.5 570.39V578.95M784.5 571.83V578.92M785.5 570.10V579.30M786.5 570.10V579.30M787.5 570.10V579.30M788.5 570.10V578.07M789.5 570.74V579.13M790.5 570.34V579.30M791.5 570.10V579.30M792.5 570.10V578.93M793.5 570.46V578.31M794.5 571.80V579.30M795.5 570.10V579.18M796.5 570.10V577.51M797.5 570.37V579.30M798.5 571.76V579.20M799.5 570.10V578.17M800.5 570.10V578.26M801.5 570.84V579.28M802.5 571.41V579.30M803.5 570.10V578.66M804.5 570.10V578.36M805.5 571.15V579.09M806.5 572.20V579.30M807.5 570.89V579.30M808.5 570.10V578.02M809.5 570.10V579.15M810.5 570.10V579.30M811.5 570.10V579.30M812.5 570.93V578.82M813.5 572.23V578.32M814.5 570.92V579.30M815.5 570.10V579.30M816.5 570.10V579.30M817.5 570.10V578.75M818.5 570.10V578.22M819.5 570.10V579.06M820.5 570.10V579.30M821.5 570.69V578.34M822.5 571.47V578.32M823.5 570.10V579.30M824.5 570.10V579.30M825.5 570.10V578.28M826.5 570.10V579.16M827.5 570.10V579.30M828.5 570.10V578.78M829.5 570.10V578.56M830.5 570.10V579.30M831.5 570.10V579.30M832.5 570.10V578.88M833.5 570.97V578.43M834.5 570.54V579.15M835.5 570.10V579.30M836.5 570.10V578.78M837.5 570.10V577.92M838.5 571.52V578.62M839.5 570.29V579.30M840.5 570.10V579.30M841.5 570.10V578.91M842.5 570.10V578.87M843.5 570.10V579.30M844.5 570.10V579.30M845.5 570.49V579.30M846.5 571.14V579.30M847.5 570.52V579.30M848.5 570.10V579.30M849.5 570.10V579.30M850.5 570.10V577.13M851.5 570.10V579.30" stroke="#f028f0" stroke-width="1" fill="none" opacity="1"/><path d="M852.5 571.01V579.60M853.5 570.65V580.35M854.5 570.69V579.31M855.5 571.39V578.61M856.5 571.85V578.15M857.5 572.44V577.84M858.5 572.84V577.12M859.5 572.61V576.88M860.5 572.61V577.39M861.5 572.67V577.33M862.5 572.71V577.09M863.5 572.74V576.51M864.5 572.85V577.11M865.5 573.39V577.23M866.5 573.35V577.11M867.5 572.83V576.95M868.5 573.03V577.11M869.5 573.05V577.16M870.5 572.80V576.53M871.5 572.80V577.04M872.5 573.17V577.20M873.5 573.47V576.48M874.5 572.97V577.06M875.5 572.81V577.20M876.5 573.14V577.20M877.5 572.89V577.06M878.5 572.80V576.95M879.5 572.80V577.14M880.5 572.80V577.20M881.5 573.13V577.20M882.5 573.13V577.20M883.5 572.80V577.20M884.5 572.80V577.20M885.5 572.80V577.20M886.5 572.80V577.03M887.5 572.80V576.76M888.5 572.80V577.16M889.5 572.80V577.20M890.5 572.80V576.73M891.5 572.80V576.60M892.5 572.80V577.18M893.5 572.97V577.18M894.5 573.25V576.96M895.5 572.84V577.14M896.5 572.80V577.20M897.5 572.80V577.20M898.5 572.80V577.20M899.5 572.80V577.20M900.5 572.80V577.20M901.5 572.80V577.20M902.5 572.80V577.20M903.5 572.80V577.20M904.5 572.80V577.20M905.5 572.80V577.20M906.5 572.80V577.20M907.5 572.80V577.20M908.5 572.80V577.20M909.5 572.80V577.20M910.5 572.80V577.20M911.5 572.80V577.20M912.5 572.80V577.20M913.5 572.80V577.08M914.5 572.80V576.93M915.5 572.80V577.14M916.5 573.02V577.20M917.5 573.50V577.20M918.5 572.80V577.20M919.5 572.80V576.68M920.5 572.80V577.02M921.5 572.80V577.20M922.5 572.80V577.13M923.5 572.80V576.45M924.5 572.80V577.11M925.5 572.80V577.20M926.5 572.80V577.20M927.5 572.80V577.20M928.5 573.16V577.20M929.5 573.42V577.20M930.5 572.99V577.20M931.5 572.90V577.20M932.5 573.23V577.20M933.5 572.80V577.20M934.5 572.80V576.95M935.5 572.80V577.20M936.5 572.80V577.20M937.5 573.42V577.20M938.5 572.80V577.20M939.5 572.80V577.20M940.5 572.80V577.03M941.5 572.80V576.76M942.5 572.80V577.11M943.5 572.80V577.20M944.5 573.13V577.20M945.5 573.03V577.20M946.5 572.80V577.20M947.5 572.80V577.20M948.5 572.80V577.20M949.5 572.80V577.20M950.5 572.80V577.20M951.5 572.80V577.06M952.5 572.80V576.88M953.5 572.80V577.20M954.5 572.80V577.20M955.5 572.80V577.20M956.5 572.80V577.20M957.5 572.80V577.20M958.5 572.80V577.20M959.5 573.16V577.20M960.5 573.00V577.20M961.5 572.80V577.20M962.5 572.99V577.20M963.5 573.48V577.20M964.5 572.80V577.20M965.5 572.80V577.20M966.5 572.80V577.20M967.5 572.80V576.86M968.5 572.80V576.53M969.5 572.82V577.19M970.5 573.39V577.20M971.5 572.85V577.20M972.5 572.80V577.20M973.5 572.80V577.20M974.5 572.95V577.20M975.5 573.19V577.20M976.5 572.80V577.20M977.5 572.80V577.20M978.5 572.80V577.20M979.5 572.80V577.10M980.5 572.80V576.91M981.5 572.80V577.11M982.5 572.80V577.20M983.5 572.80V577.14M984.5 572.80V576.46M985.5 572.80V577.05M986.5 573.22V577.20M987.5 573.56V577.16M988.5 573.01V576.94M989.5 572.80V577.19M990.5 572.80V577.20M991.5 572.80V577.16M992.5 572.80V576.79M993.5 572.80V576.94M994.5 572.80V577.20M995.5 572.80V577.20M996.5 572.80V577.20M997.5 572.92V577.20M998.5 573.26V577.11M999.5 573.04V576.84M1000.5 572.85V577.17M1001.5 573.26V577.20M1002.5 573.06V577.20M1003.5 572.80V577.04M1004.5 572.80V576.57M1005.5 572.80V576.94M1006.5 572.80V577.20M1007.5 572.80V577.20M1008.5 572.80V577.20M1009.5 572.80V577.20M1010.5 572.80V577.20M1011.5 572.80V577.20M1012.5 572.98V577.20M1013.5 573.43V577.20M1014.5 572.86V577.20M1015.5 572.80V577.20M1016.5 572.80V577.20M1017.5 572.80V577.20M1018.5 572.80V577.20M1019.5 572.80V577.20M1020.5 572.80V577.20M1021.5 572.80V577.20M1022.5 572.94V577.20M1023.5 573.49V577.20M1024.5 572.83V577.20M1025.5 572.80V576.73M1026.5 572.80V576.90M1027.5 572.80V577.20M1028.5 572.80V577.20M1029.5 572.80V577.20M1030.5 572.80V576.92M1031.5 572.80V576.82M1032.5 572.80V577.11M1033.5 573.42V577.20M1034.5 573.30V577.20M1035.5 572.80V577.20M1036.5 572.80V577.20M1037.5 572.80V577.17M1038.5 572.89V576.61M1039.5 573.00V576.73M1040.5 572.80V577.20M1041.5 572.80V577.20M1042.5 572.82V577.20M1043.5 573.00V577.20M1044.5 572.99V577.20M1045.5 572.81V577.20M1046.5 573.18V577.20M1047.5 573.29V577.20M1048.5 572.80V577.20M1049.5 572.90V577.20M1050.5 573.25V577.20M1051.5 572.80V577.20M1052.5 572.80V577.20M1053.5 572.80V577.20M1054.5 572.80V577.11M1055.5 572.80V576.75M1056.5 572.80V576.89M1057.5 572.80V577.20M1058.5 572.80V577.20M1059.5 572.80V577.20M1060.5 572.80V576.70M1061.5 572.98V576.56M1062.5 572.91V577.09M1063.5 572.80V577.20M1064.5 572.80V577.20M1065.5 572.97V577.20M1066.5 572.92V577.20M1067.5 572.80V577.20M1068.5 573.14V577.20M1069.5 573.61V577.04M1070.5 573.08V576.96M1071.5 572.80V577.20M1072.5 572.80V577.20M1073.5 572.80V577.20M1074.5 572.80V577.20M1075.5 572.80V577.20M1076.5 572.80V577.20M1077.5 572.80V577.20M1078.5 573.30V577.20M1079.5 573.17V577.20M1080.5 572.80V577.20M1081.5 572.80V577.20M1082.5 573.14V577.07M1083.5 573.30V576.78M1084.5 572.80V577.16M1085.5 572.80V577.20M1086.5 572.80V577.20M1087.5 572.93V577.20M1088.5 572.91V577.20M1089.5 572.80V577.20M1090.5 572.83V577.20M1091.5 573.34V577.20M1092.5 572.98V577.20M1093.5 572.80V577.20M1094.5 572.80V577.20M1095.5 572.80V577.20M1096.5 572.80V577.20M1097.5 572.80V577.20M1098.5 572.80V577.20M1099.5 572.80V577.20M1100.5 572.80V577.20M1101.5 572.80V577.20M1102.5 572.98V577.20M1103.5 573.48V577.20M1104.5 573.22V577.11M1105.5 572.80V576.77M1106.5 572.80V577.16M1107.5 572.80V577.20M1108.5 572.80V577.20M1109.5 572.80V577.20M1110.5 572.80V576.85M1111.5 572.80V577.13M1112.5 572.80V577.20M1113.5 572.90V577.20M1114.5 573.15V577.20M1115.5 572.80V577.20M1116.5 572.80V577.20M1117.5 572.80V577.20M1118.5 572.80V577.20M1119.5 572.80V576.99M1120.5 572.80V576.70M1121.5 573.16V577.13M1122.5 573.21V577.20M1123.5 572.80V577.06M1124.5 572.80V577.00M1125.5 573.04V577.15M1126.5 573.19V577.20M1127.5 572.90V577.20M1128.5 572.80V577.20M1129.5 572.80V577.20M1130.5 573.16V577.20M1131.5 573.17V577.20M1132.5 572.80V577.06M1133.5 572.80V576.91M1134.5 572.80V577.12M1135.5 572.80V577.20M1136.5 572.80V577.20M1137.5 572.80V577.10M1138.5 572.80V576.94M1139.5 572.87V577.08M1140.5 573.07V577.20M1141.5 572.80V577.20M1142.5 572.80V577.20M1143.5 572.80V577.20M1144.5 572.80V577.20M1145.5 572.80V577.20M1146.5 572.80V577.20M1147.5 572.80V577.20M1148.5 572.80V577.20M1149.5 572.80V577.20M1150.5 573.00V577.20M1151.5 573.33V577.20M1152.5 572.98V577.20M1153.5 572.80V577.20M1154.5 572.80V576.82M1155.5 572.80V576.49M1156.5 572.80V577.01M1157.5 572.80V576.90M1158.5 572.80V576.53M1159.5 572.80V577.01M1160.5 572.80V577.20M1161.5 572.92V577.20M1162.5 573.46V577.20M1163.5 573.20V577.20M1164.5 572.80V577.20M1165.5 572.80V577.20M1166.5 572.80V577.20M1167.5 572.80V577.20M1168.5 572.80V577.20M1169.5 572.80V577.20M1170.5 572.80V577.20M1171.5 572.80V577.20M1172.5 572.80V577.20M1173.5 572.80V577.20M1174.5 572.83V577.18M1175.5 573.25V576.84M1176.5 573.27V576.97M1177.5 572.85V577.20M1178.5 572.80V577.20M1179.5 572.80V577.20M1180.5 572.80V577.20M1181.5 572.80V577.20M1182.5 572.80V577.20M1183.5 572.80V577.08M1184.5 572.80V576.82M1185.5 572.80V577.07M1186.5 572.80V577.20M1187.5 573.11V576.90M1188.5 573.04V576.56M1189.5 572.80V577.20M1190.5 572.80V577.20M1191.5 573.21V576.68M1192.5 573.17V576.85M1193.5 572.80V577.20M1194.5 572.80V577.20M1195.5 572.83V576.62M1196.5 572.97V576.89M1197.5 572.95V577.20M1198.5 572.81V577.20M1199.5 572.80V577.20M1200.5 572.80V577.20M1201.5 572.80V577.20M1202.5 572.80V577.20M1203.5 572.80V577.18M1204.5 572.89V576.70M1205.5 573.41V576.79M1206.5 572.80V577.20M1207.5 572.80V577.20M1208.5 572.80V577.20M1209.5 572.80V577.20M1210.5 572.80V577.20M1211.5 572.80V577.20M1212.5 572.80V577.20M1213.5 572.80V577.20M1214.5 572.80V577.20M1215.5 572.80V577.20M1216.5 572.80V577.20M1217.5 572.80V577.20M1218.5 572.80V576.82M1219.5 572.80V576.95M1220.5 572.80V577.20M1221.5 572.80V577.20M1222.5 573.59V577.20M1223.5 572.82V577.20M1224.5 572.80V577.20M1225.5 572.80V577.20M1226.5 572.80V576.82M1227.5 572.80V576.99M1228.5 572.95V577.20M1229.5 573.36V577.12M1230.5 573.14V576.98M1231.5 572.80V577.19M1232.5 572.80V577.20M1233.5 572.80V577.20M1234.5 572.80V576.96M1235.5 572.80V576.82M1236.5 572.80V577.20M1237.5 572.80V577.20M1238.5 572.80V577.20M1239.5 572.80V577.20M1240.5 572.80V577.20M1241.5 572.80V577.13M1242.5 572.80V576.99M1243.5 572.80V577.09M1244.5 572.80V577.20M1245.5 572.80V577.09M1246.5 573.09V576.79M1247.5 573.21V577.20M1248.5 572.80V577.20M1249.5 572.80V577.16M1250.5 573.08V576.90M1251.5 572.86V577.20M1252.5 572.80V577.20M1253.5 572.80V577.20M1254.5 572.80V577.20M1255.5 572.80V576.78M1256.5 572.80V576.98M1257.5 572.80V577.20M1258.5 572.80V577.20M1259.5 572.80V577.20M1260.5 572.80V577.20M1261.5 572.80V577.20M1262.5 572.97V577.20M1263.5 573.02V577.20M1264.5 572.80V577.20M1265.5 572.80V577.20M1266.5 572.80V577.20M1267.5 573.34V577.20" stroke="#f028f0" stroke-width="1" fill="none" opacity="1"/><path d="M852.90 538.00 L854.10 567.50 L856.90 574.50 L854.10 581.50 L852.90 609.30 L852.00 581.50 L852.00 567.50 Z" fill="#f028f0"/><path d="M852.90 538.00V609.30" stroke="#f028f0" stroke-width="1.2"/><ellipse cx="853.9" cy="574.8" rx="3.5" ry="6" fill="#f028f0"/>
</svg>
</body></html>
